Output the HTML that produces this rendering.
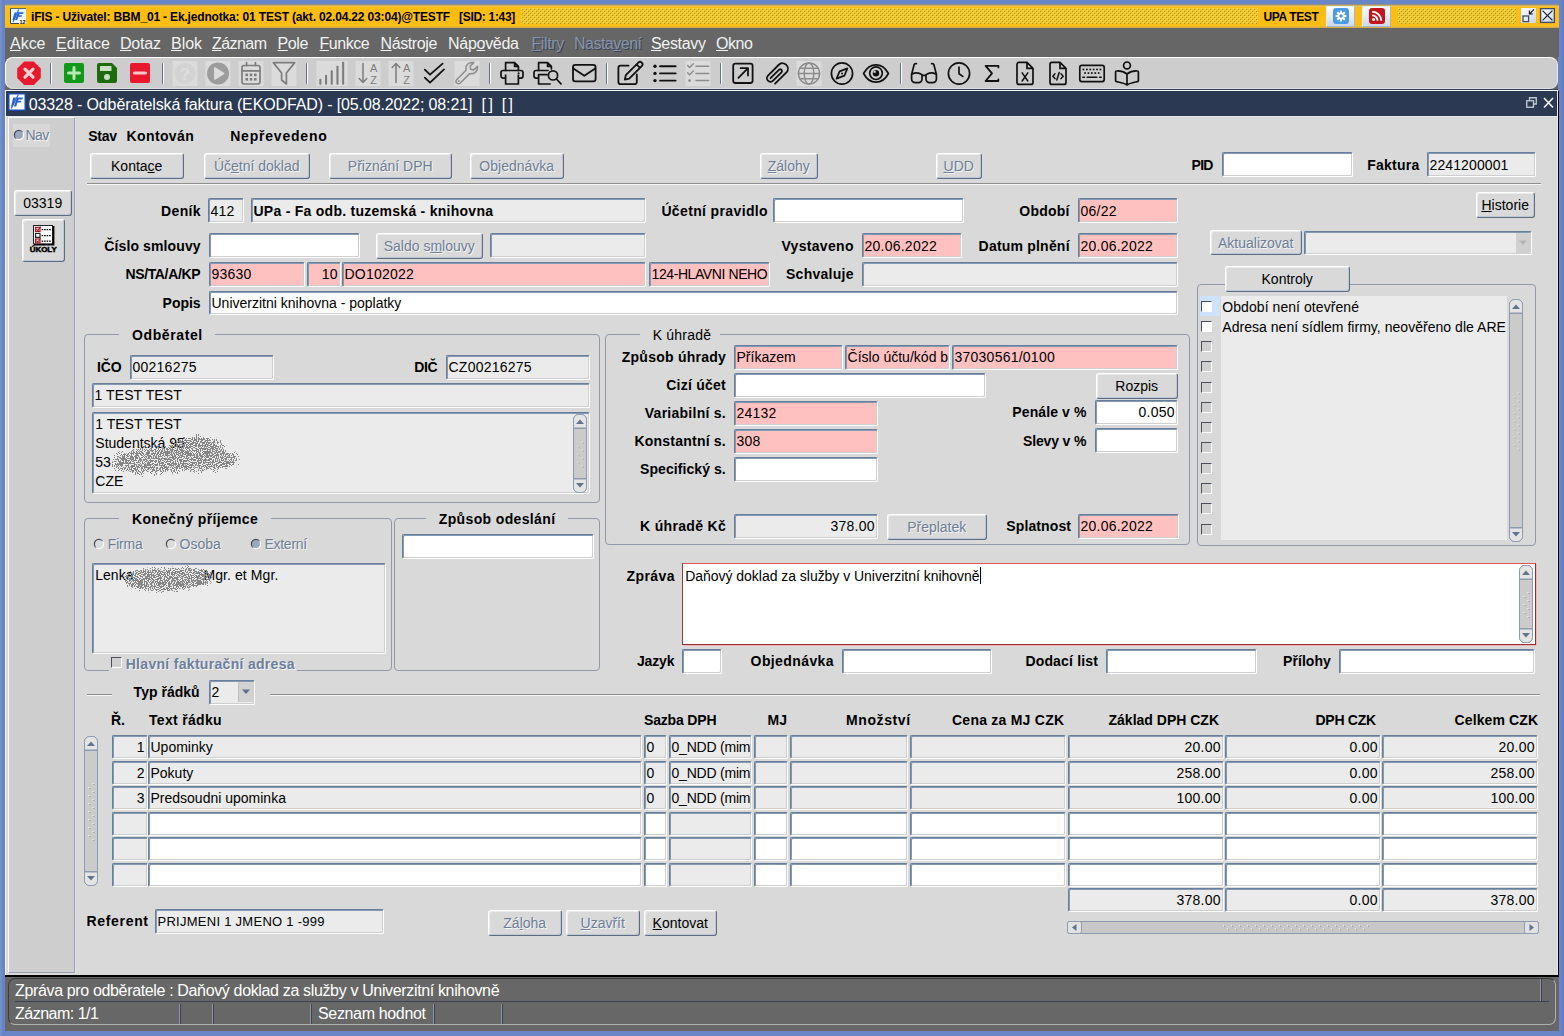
<!DOCTYPE html>
<html lang="cs"><head><meta charset="utf-8"><title>iFIS</title><style>
html,body{margin:0;padding:0}
body{width:1564px;height:1036px;background:#6a86c6;position:relative;overflow:hidden;font-family:"Liberation Sans",sans-serif;font-size:14px;color:#000;line-height:1}
div,span{box-sizing:border-box}
.a{position:absolute;white-space:nowrap}
.f{position:absolute;border:1px solid;border-color:#687f9c #fff #fff #687f9c;border-radius:2px;background:#fff;box-shadow:inset 1px 1px 0 #8699b2,inset -1px -1px 0 #cfcfd2}
.g{background:#ebebeb}
.p{background:#ffc0c0}
.r{text-align:right}
.b{font-weight:bold}
.l{position:absolute;white-space:nowrap;font-weight:bold;letter-spacing:.25px}
.lr{text-align:right}
.btn{position:absolute;border:1px solid;border-color:#fff #5f6c80 #5f6c80 #fff;border-radius:3px;background:#d9d9d9;box-shadow:inset -1px -1px 0 #bcc8d8,inset 1px 1px 0 #ececec}
.dis{color:#7f8ea6}
.gb{position:absolute;border:1px solid #9299ab;border-radius:4px}
.gt{position:absolute;background:#d9d9d9;white-space:nowrap;font-weight:bold;padding:0 18px}
.hl{position:absolute;height:2px;border-top:1px solid #8e8e8e;border-bottom:1px solid #f6f6f6}
u{text-decoration:underline;text-underline-offset:1px;text-decoration-thickness:1px}
</style></head><body>
<div class="a" style="left:0;top:0;width:1564px;height:1036px;background:linear-gradient(90deg,#7a94d2 0,#6582c4 3px,#6a86c6 5px,#6a86c6 1559px,#6582c4 1561px,#5f7cc0 1564px)"></div>
<div class="a" style="left:5px;top:4px;width:1554px;height:24px;background:linear-gradient(#7e86a0 0,#a89c6c 1px,#f0c456 2px,#fdbd12 3.5px,#fdbd12 21px,#ecb934 23px,#b9a05a 24px)"></div>
<svg class="a" style="left:521px;top:8px" width="737" height="16" viewBox="0 0 737 16"><defs><pattern id="d1" width="4" height="4" patternUnits="userSpaceOnUse"><rect width="4" height="4" fill="#f5c42a"/><rect x="0" y="0" width="1" height="1" fill="#fff468"/><rect x="2" y="2" width="1" height="1" fill="#fff468"/><rect x="1" y="1" width="1" height="1" fill="#ab850a"/><rect x="3" y="3" width="1" height="1" fill="#ab850a"/></pattern></defs><rect width="737" height="16" fill="url(#d1)"/></svg>
<svg class="a" style="left:1398px;top:8px" width="118" height="16" viewBox="0 0 118 16"><defs><pattern id="d2" width="4" height="4" patternUnits="userSpaceOnUse"><rect width="4" height="4" fill="#f5c42a"/><rect x="0" y="0" width="1" height="1" fill="#fff468"/><rect x="2" y="2" width="1" height="1" fill="#fff468"/><rect x="1" y="1" width="1" height="1" fill="#ab850a"/><rect x="3" y="3" width="1" height="1" fill="#ab850a"/></pattern></defs><rect width="118" height="16" fill="url(#d2)"/></svg>
<svg class="a" style="left:10px;top:8px" width="16" height="16" viewBox="0 0 16 16"><rect x="0" y="0" width="16" height="16" fill="#e9f7ff"/><path d="M0.5 0 V15.5 H9" stroke="#3a4450" fill="none"/><path d="M0 0.5 H16" stroke="#5a6a7a" fill="none"/><path d="M4.6 4.4 H7 L4.2 12 H2.4 Z M8 4.2 H13.6 L13 6 H9.4 L9 7.2 H12 L11.4 8.8 H8.4 L7.2 12 H5 Z" fill="#2a62d4"/><path d="M8.8 1.4 L3 14" stroke="#2a62d4" stroke-width="1.1" fill="none"/><rect x="9" y="11" width="7" height="5" fill="#fffce8"/><text x="12.6" y="15.6" font-family="Liberation Sans,sans-serif" font-weight="bold" font-size="5.5" text-anchor="middle">12</text></svg>
<div class="a" style="font-size:12px;font-weight:bold;color:#000;height:18px;line-height:18px;top:8px;letter-spacing:-0.165px;left:31.00px;">iFIS - Uživatel: BBM_01 - Ek.jednotka: 01 TEST (akt. 02.04.22 03:04)@TESTF</div>
<div class="a" style="font-size:12px;font-weight:bold;color:#000;height:18px;line-height:18px;top:8px;letter-spacing:-0.304px;left:459.00px;">[SID: 1:43]</div>
<div class="a" style="font-size:12px;font-weight:bold;color:#000;height:18px;line-height:18px;top:8px;letter-spacing:-0.400px;left:1263.60px;">UPA TEST</div>
<div class="a" style="left:1326px;top:6px;width:29px;height:21px;background:linear-gradient(#fdfdfe,#e4e9f2 55%,#cfd8e8);border:1px solid;border-color:#e8ecf4 #a8b4cc #a8b4cc #e8ecf4"></div>
<svg class="a" style="left:1333px;top:8px" width="16" height="16" viewBox="0 0 16 16"><rect width="16" height="16" rx="3" fill="#4a9bea"/><g fill="#fff"><circle cx="8" cy="8" r="3.6"/><rect x="7" y="2.6" width="2" height="10.8" rx="0.5" transform="rotate(0 8 8)"/><rect x="7" y="2.6" width="2" height="10.8" rx="0.5" transform="rotate(45 8 8)"/><rect x="7" y="2.6" width="2" height="10.8" rx="0.5" transform="rotate(90 8 8)"/><rect x="7" y="2.6" width="2" height="10.8" rx="0.5" transform="rotate(135 8 8)"/></g><circle cx="8" cy="8" r="1.7" fill="#4a9bea"/></svg>
<div class="a" style="left:1362px;top:6px;width:29px;height:21px;background:linear-gradient(#fdfdfe,#e4e9f2 55%,#cfd8e8);border:1px solid;border-color:#e8ecf4 #a8b4cc #a8b4cc #e8ecf4"></div>
<svg class="a" style="left:1369px;top:8px" width="16" height="16" viewBox="0 0 16 16"><rect width="16" height="16" rx="3" fill="#c4151c"/><circle cx="4.6" cy="11.6" r="1.5" fill="#fff"/><path d="M3.2 7.4 a5.4 5.4 0 0 1 5.4 5.4 M3.2 3.8 a9 9 0 0 1 9 9" stroke="#fff" stroke-width="1.9" fill="none"/></svg>
<svg class="a" style="left:1521px;top:8px" width="34" height="16" viewBox="0 0 34 16"><defs><linearGradient id="wb" x1="0" y1="0" x2="1" y2="1"><stop offset="0" stop-color="#fff"/><stop offset="1" stop-color="#c9d4e6"/></linearGradient></defs><rect x="0" y="0" width="15" height="15" fill="url(#wb)"/><rect x="2" y="8" width="5.6" height="5.6" fill="#e8ecf4" stroke="#3c4c68" stroke-width="1.3"/><path d="M13 1.4 L8.6 5.8 M8.4 2.6 V6 H11.8" stroke="#111" stroke-width="1.1" fill="none"/><rect x="19.6" y="0.6" width="13.8" height="13.8" fill="url(#wb)" stroke="#3c4c68" stroke-width="1.4"/><path d="M21.6 2.6 L31.4 12.4 M31.4 2.6 L21.6 12.4" stroke="#1c2638" stroke-width="1.3"/></svg>
<div class="a" style="left:5px;top:28px;width:1554px;height:29px;background:#666"></div>
<div class="a" style="left:5px;top:57px;width:1553px;height:33px;background:#666"></div>
<div class="a" style="left:5px;top:57px;width:1553px;height:32px;background:#cdcdcd;border-radius:8px;border:1px solid;border-color:#fff #e6e6e6 #d9dde5 #fff"></div>
<div class="a" style="left:12px;top:89px;width:1546px;height:1px;background:#3a4254"></div>
<div class="a" style="left:50px;top:63px;width:2px;height:21px;border-radius:1px;background:linear-gradient(90deg,#5d6f8c 1px,#fff 1px)"></div>
<div class="a" style="left:162px;top:63px;width:2px;height:21px;border-radius:1px;background:linear-gradient(90deg,#5d6f8c 1px,#fff 1px)"></div>
<div class="a" style="left:306px;top:63px;width:2px;height:21px;border-radius:1px;background:linear-gradient(90deg,#5d6f8c 1px,#fff 1px)"></div>
<div class="a" style="left:489px;top:63px;width:2px;height:21px;border-radius:1px;background:linear-gradient(90deg,#5d6f8c 1px,#fff 1px)"></div>
<div class="a" style="left:606px;top:63px;width:2px;height:21px;border-radius:1px;background:linear-gradient(90deg,#5d6f8c 1px,#fff 1px)"></div>
<div class="a" style="left:720px;top:63px;width:2px;height:21px;border-radius:1px;background:linear-gradient(90deg,#5d6f8c 1px,#fff 1px)"></div>
<div class="a" style="left:900px;top:63px;width:2px;height:21px;border-radius:1px;background:linear-gradient(90deg,#5d6f8c 1px,#fff 1px)"></div>
<svg class="a" style="left:15.599999999999998px;top:60.3px;overflow:visible" width="26" height="26" viewBox="0 0 26 26"><polygon points="8.2,1.5 17.8,1.5 24.8,8.5 24.8,18 17.8,25 8.2,25 1.2,18 1.2,8.5" fill="#e8192c"/><path d="M9 9.2 L17 17.2 M17 9.2 L9 17.2" stroke="#f6d3d3" stroke-width="3.2" stroke-linecap="round" fill="none"/></svg>
<svg class="a" style="left:61.2px;top:60.3px;overflow:visible" width="26" height="26" viewBox="0 0 26 26"><rect x="3" y="3" width="20" height="20" rx="2" fill="#13991a"/><path d="M7.5 13 H18.5 M13 7.5 V18.5" stroke="#b9e8b4" stroke-width="3" stroke-linecap="round" fill="none"/></svg>
<svg class="a" style="left:94.2px;top:60.3px;overflow:visible" width="26" height="26" viewBox="0 0 26 26"><path d="M5 3 H18 L23 8 V21 a2 2 0 0 1 -2 2 H5 a2 2 0 0 1 -2 -2 V5 a2 2 0 0 1 2 -2 Z" fill="#1d6b0c"/><rect x="6" y="6" width="11.5" height="5" rx="0.6" fill="#c9dfc4"/><circle cx="13" cy="17" r="3" fill="#c9dfc4"/></svg>
<svg class="a" style="left:127.2px;top:60.3px;overflow:visible" width="26" height="26" viewBox="0 0 26 26"><rect x="3" y="3" width="20" height="20" rx="2" fill="#e8192c"/><path d="M7.5 13 H18.5" stroke="#f6c9c9" stroke-width="3" stroke-linecap="round" fill="none"/></svg>
<svg class="a" style="left:171.6px;top:60.3px;overflow:visible" width="26" height="26" viewBox="0 0 26 26"><rect x="0.5" y="1" width="25" height="25" fill="#dbdbdb"/><circle cx="13" cy="13.5" r="10.5" fill="#d3d3d3"/><text x="13" y="19.5" font-family="Liberation Sans,sans-serif" font-size="17" fill="#dedede" text-anchor="middle" font-weight="bold">?</text></svg>
<svg class="a" style="left:204.6px;top:60.3px;overflow:visible" width="26" height="26" viewBox="0 0 26 26"><rect x="0.5" y="1" width="25" height="25" fill="#dbdbdb"/><circle cx="13" cy="13.5" r="11" fill="#9c9c9c"/><path d="M9.8 8 L18.6 13.5 L9.8 19 Z" fill="#dcdcdc" stroke="#dcdcdc" stroke-width="1.5" stroke-linejoin="round"/></svg>
<svg class="a" style="left:237.6px;top:60.3px;overflow:visible" width="26" height="26" viewBox="0 0 26 26"><rect x="0.5" y="1" width="25" height="25" fill="#dbdbdb"/><rect x="4" y="5.5" width="18" height="18.5" rx="2.2" fill="none" stroke="#7d7d7d" stroke-width="1.7" stroke-linecap="round" stroke-linejoin="round"/><path d="M4 10.8 H22 M8.6 2.6 V5.5 M17.4 2.6 V5.5" fill="none" stroke="#7d7d7d" stroke-width="1.7" stroke-linecap="round" stroke-linejoin="round"/><rect x="7.4" y="13.6" width="2.6" height="2.6" fill="#7d7d7d"/><rect x="11.7" y="13.6" width="2.6" height="2.6" fill="#7d7d7d"/><rect x="16" y="13.6" width="2.6" height="2.6" fill="#7d7d7d"/><rect x="7.4" y="18" width="2.6" height="2.6" fill="#7d7d7d"/><rect x="11.7" y="18" width="2.6" height="2.6" fill="#7d7d7d"/><rect x="16" y="18" width="2.6" height="2.6" fill="#7d7d7d"/></svg>
<svg class="a" style="left:270.59999999999997px;top:60.3px;overflow:visible" width="26" height="26" viewBox="0 0 26 26"><rect x="0.5" y="1" width="25" height="25" fill="#dbdbdb"/><path d="M2.3 2.6 H23.7 L15.4 13 V24 L10.6 20 V13 Z" fill="none" stroke="#7d7d7d" stroke-width="1.7" stroke-linecap="round" stroke-linejoin="round"/></svg>
<svg class="a" style="left:318.59999999999997px;top:60.3px;overflow:visible" width="26" height="26" viewBox="0 0 26 26"><rect x="-2.5" y="1" width="31" height="25" fill="#dbdbdb"/><rect x="0.3" y="18.8" width="2.1" height="6" rx="0.8" fill="#7d7d7d"/><rect x="6" y="14.8" width="2.1" height="10" rx="0.8" fill="#7d7d7d"/><rect x="11.7" y="10.3" width="2.1" height="14.5" rx="0.8" fill="#7d7d7d"/><rect x="17.4" y="5.800000000000001" width="2.1" height="19" rx="0.8" fill="#7d7d7d"/><rect x="23.1" y="1.8000000000000007" width="2.1" height="23" rx="0.8" fill="#7d7d7d"/></svg>
<svg class="a" style="left:354.5px;top:60.3px;overflow:visible" width="26" height="26" viewBox="0 0 26 26"><rect x="0.5" y="1" width="25" height="25" fill="#dbdbdb"/><path d="M8 3.5 V22.5 M4.2 18.6 L8 22.5 L11.8 18.6" fill="none" stroke="#7d7d7d" stroke-width="1.5" stroke-linecap="round" stroke-linejoin="round"/><text x="18.7" y="11.8" font-family="Liberation Sans,sans-serif" font-size="11" fill="#7d7d7d" text-anchor="middle" >A</text><text x="18.7" y="23.6" font-family="Liberation Sans,sans-serif" font-size="11" fill="#7d7d7d" text-anchor="middle" >Z</text></svg>
<svg class="a" style="left:387.5px;top:60.3px;overflow:visible" width="26" height="26" viewBox="0 0 26 26"><rect x="0.5" y="1" width="25" height="25" fill="#dbdbdb"/><path d="M8 3.5 V22.5 M4.2 7.4 L8 3.5 L11.8 7.4" fill="none" stroke="#7d7d7d" stroke-width="1.5" stroke-linecap="round" stroke-linejoin="round"/><text x="18.7" y="11.8" font-family="Liberation Sans,sans-serif" font-size="11" fill="#7d7d7d" text-anchor="middle" >A</text><text x="18.7" y="23.6" font-family="Liberation Sans,sans-serif" font-size="11" fill="#7d7d7d" text-anchor="middle" >Z</text></svg>
<svg class="a" style="left:421.2px;top:60.3px;overflow:visible" width="26" height="26" viewBox="0 0 26 26"><path d="M3.8 9.6 L9 14.6 L21.6 3.6 M3.8 17.6 L9 22.6 L23 9.4" fill="none" stroke="#111" stroke-width="1.8" stroke-linecap="round" stroke-linejoin="round"/></svg>
<svg class="a" style="left:453.7px;top:60.3px;overflow:visible" width="26" height="26" viewBox="0 0 26 26"><rect x="0.5" y="1" width="25" height="25" fill="#dbdbdb"/><path d="M15.2 3.2 a6.3 6.3 0 0 1 4.6 -0.6 l-3.7 3.7 l0.6 3 l3 0.6 l3.7 -3.7 a6.3 6.3 0 0 1 -7.8 7.4 L6.3 23 a2.4 2.4 0 0 1 -3.5 -3.5 L12.1 10.2 a6.3 6.3 0 0 1 3.1 -7 Z" fill="none" stroke="#8d8d8d" stroke-width="1.5" stroke-linecap="round" stroke-linejoin="round"/><circle cx="4.9" cy="21" r="0.9" fill="#8d8d8d"/></svg>
<svg class="a" style="left:498.59999999999997px;top:60.3px;overflow:visible" width="26" height="26" viewBox="0 0 26 26"><path d="M6.6 10.5 V2.6 H15.6 L19.4 6.4 V10.5 M15.6 2.6 V6.4 H19.4" fill="none" stroke="#111" stroke-width="1.7" stroke-linecap="round" stroke-linejoin="round"/><rect x="2" y="10.5" width="22" height="7.6" rx="2.2" fill="none" stroke="#111" stroke-width="1.7" stroke-linecap="round" stroke-linejoin="round"/><path d="M6.6 14.6 V24 H19.4 V14.6" fill="#ccc" stroke="#111" stroke-width="1.7" stroke-linejoin="round"/><circle cx="19.6" cy="13.3" r="1" fill="#111"/></svg>
<svg class="a" style="left:533.2px;top:60.3px;overflow:visible" width="26" height="26" viewBox="0 0 26 26"><path d="M5.6 10.5 V2.6 H14.6 L18.4 6.4 V9 M14.6 2.6 V6.4 H18.4" fill="none" stroke="#111" stroke-width="1.7" stroke-linecap="round" stroke-linejoin="round"/><path d="M15 10.5 H3.2 a2.2 2.2 0 0 0 -2.2 2.2 V16 a2.2 2.2 0 0 0 2.2 2.2 H5.6 M5.6 14.6 H14 M5.6 14.6 V24 H17" fill="none" stroke="#111" stroke-width="1.7" stroke-linecap="round" stroke-linejoin="round"/><circle cx="20" cy="15.4" r="4.6" fill="none" stroke="#111" stroke-width="1.7" stroke-linecap="round" stroke-linejoin="round"/><path d="M23.4 19 L28 23.8" fill="none" stroke="#111" stroke-width="1.7" stroke-linecap="round" stroke-linejoin="round"/></svg>
<svg class="a" style="left:570.6px;top:60.3px;overflow:visible" width="26" height="26" viewBox="0 0 26 26"><rect x="2" y="4.8" width="22.6" height="16.6" rx="2.4" fill="none" stroke="#111" stroke-width="1.8" stroke-linecap="round" stroke-linejoin="round"/><path d="M2.4 8.4 L13.3 15.8 L24.2 8.4" fill="none" stroke="#111" stroke-width="1.8" stroke-linecap="round" stroke-linejoin="round"/></svg>
<svg class="a" style="left:616.2px;top:60.3px;overflow:visible" width="26" height="26" viewBox="0 0 26 26"><path d="M12.6 5.6 H4.6 a2.2 2.2 0 0 0 -2.2 2.2 V22 a2.2 2.2 0 0 0 2.2 2.2 H18.6 a2.2 2.2 0 0 0 2.2 -2.2 V14.4" fill="none" stroke="#111" stroke-width="1.8" stroke-linecap="round" stroke-linejoin="round"/><path d="M8.8 19.6 L9.8 15.2 L22.6 2.4 a2 2 0 0 1 2.8 0 l0.6 0.6 a2 2 0 0 1 0 2.8 L13.2 18.6 Z M20.6 4.4 L24 7.8" fill="none" stroke="#111" stroke-width="1.8" stroke-linecap="round" stroke-linejoin="round"/></svg>
<svg class="a" style="left:651.8000000000001px;top:60.3px;overflow:visible" width="26" height="26" viewBox="0 0 26 26"><circle cx="3" cy="6.2" r="1.7" fill="#111"/><path d="M8 6.2 H23.6" fill="none" stroke="#111" stroke-width="1.9" stroke-linecap="round" stroke-linejoin="round"/><circle cx="3" cy="13.4" r="1.7" fill="#111"/><path d="M8 13.4 H23.6" fill="none" stroke="#111" stroke-width="1.9" stroke-linecap="round" stroke-linejoin="round"/><circle cx="3" cy="20.6" r="1.7" fill="#111"/><path d="M8 20.6 H23.6" fill="none" stroke="#111" stroke-width="1.9" stroke-linecap="round" stroke-linejoin="round"/></svg>
<svg class="a" style="left:684.6px;top:60.3px;overflow:visible" width="26" height="26" viewBox="0 0 26 26"><rect x="0.5" y="1" width="25" height="25" fill="#dbdbdb"/><path d="M2.6 5.6 L4.6 7.6 L8.4 3.8 M2.6 12.8 L4.6 14.8 L8.4 11" fill="none" stroke="#8d8d8d" stroke-width="1.4" stroke-linecap="round" stroke-linejoin="round"/><circle cx="4.6" cy="20.6" r="1.4" fill="#8d8d8d"/><path d="M11 6.2 H23.6" fill="none" stroke="#8d8d8d" stroke-width="1.5" stroke-linecap="round" stroke-linejoin="round"/><path d="M11 13.4 H23.6" fill="none" stroke="#8d8d8d" stroke-width="1.5" stroke-linecap="round" stroke-linejoin="round"/><path d="M11 20.6 H23.6" fill="none" stroke="#8d8d8d" stroke-width="1.5" stroke-linecap="round" stroke-linejoin="round"/></svg>
<svg class="a" style="left:730.2px;top:60.3px;overflow:visible" width="26" height="26" viewBox="0 0 26 26"><rect x="3.2" y="3.6" width="19.4" height="19.4" rx="2.2" fill="none" stroke="#111" stroke-width="1.8" stroke-linecap="round" stroke-linejoin="round"/><path d="M8.4 17.8 L18 8.2 M10.6 8.2 H18 V15.6" fill="none" stroke="#111" stroke-width="1.8" stroke-linecap="round" stroke-linejoin="round"/></svg>
<svg class="a" style="left:762.7px;top:60.3px;overflow:visible" width="26" height="26" viewBox="0 0 26 26"><path d="M20.2 11.6 L11.6 20.2 a3.6 3.6 0 0 1 -5.1 -5.1 L17.6 4 a5.4 5.4 0 0 1 7.6 7.6 L13.6 23.2 a0 0 0 0 1 0 0 M20.2 11.6 a1.8 1.8 0 0 0 -2.5 -2.5 L9 17.7" fill="none" stroke="#111" stroke-width="1.8" stroke-linecap="round" stroke-linejoin="round" transform="translate(-1.5,0.5)"/></svg>
<svg class="a" style="left:795.6px;top:60.3px;overflow:visible" width="26" height="26" viewBox="0 0 26 26"><rect x="0.5" y="1" width="25" height="25" fill="#dbdbdb"/><circle cx="13" cy="13.5" r="10.6" fill="none" stroke="#8d8d8d" stroke-width="1.5" stroke-linecap="round" stroke-linejoin="round"/><ellipse cx="13" cy="13.5" rx="4.8" ry="10.6" fill="none" stroke="#8d8d8d" stroke-width="1.5" stroke-linecap="round" stroke-linejoin="round"/><path d="M2.4 13.5 H23.6 M3.9 8.2 H22.1 M3.9 18.8 H22.1" fill="none" stroke="#8d8d8d" stroke-width="1.5" stroke-linecap="round" stroke-linejoin="round"/></svg>
<svg class="a" style="left:829.2px;top:60.3px;overflow:visible" width="26" height="26" viewBox="0 0 26 26"><circle cx="13" cy="13.5" r="10.6" fill="none" stroke="#111" stroke-width="1.7" stroke-linecap="round" stroke-linejoin="round"/><path d="M18.4 8.4 L15.4 15.6 L7.6 18.6 L10.6 11.4 Z" fill="none" stroke="#111" stroke-width="1.7" stroke-linecap="round" stroke-linejoin="round"/><circle cx="13" cy="13.5" r="1" fill="#111"/></svg>
<svg class="a" style="left:863.0px;top:60.3px;overflow:visible" width="26" height="26" viewBox="0 0 26 26"><path d="M0.6 13.5 C4 7 8.4 4.8 13 4.8 S22 7 25.4 13.5 C22 20 17.6 22.2 13 22.2 S4 20 0.6 13.5 Z" fill="none" stroke="#111" stroke-width="1.7" stroke-linecap="round" stroke-linejoin="round"/><circle cx="13" cy="13.2" r="6.3" fill="none" stroke="#111" stroke-width="1.7" stroke-linecap="round" stroke-linejoin="round"/><circle cx="13" cy="13.2" r="3.2" fill="#111"/><circle cx="11.6" cy="11.8" r="1.3" fill="#ccc"/></svg>
<svg class="a" style="left:911.2px;top:60.3px;overflow:visible" width="26" height="26" viewBox="0 0 26 26"><path d="M5.4 3.6 H4.6 a1.6 1.6 0 0 0 -1.5 1.1 L0.6 14.4 V19 a3.6 3.6 0 0 0 3.6 3.6 H7.4 a3.6 3.6 0 0 0 3.6 -3.6 V15.4 H15 V19 a3.6 3.6 0 0 0 3.6 3.6 H21.8 a3.6 3.6 0 0 0 3.6 -3.6 V14.4 L22.9 4.7 a1.6 1.6 0 0 0 -1.5 -1.1 H20.6 M0.8 14.2 C4 12.6 8 12.6 11 14.6 M25.2 14.2 C22 12.6 18 12.6 15 14.6" fill="none" stroke="#111" stroke-width="1.7" stroke-linecap="round" stroke-linejoin="round"/></svg>
<svg class="a" style="left:945.8000000000001px;top:60.3px;overflow:visible" width="26" height="26" viewBox="0 0 26 26"><circle cx="13" cy="13.5" r="10.6" fill="none" stroke="#111" stroke-width="1.7" stroke-linecap="round" stroke-linejoin="round"/><path d="M13 7 V13.8 L16.8 16.4" fill="none" stroke="#111" stroke-width="1.7" stroke-linecap="round" stroke-linejoin="round"/></svg>
<svg class="a" style="left:979.2px;top:60.3px;overflow:visible" width="26" height="26" viewBox="0 0 26 26"><path d="M19.4 7.4 V5.8 H6.6 L13 13.4 L6.6 21 H19.4 V19.4" fill="none" stroke="#111" stroke-width="1.8" stroke-linecap="round" stroke-linejoin="round"/></svg>
<svg class="a" style="left:1011.9000000000001px;top:60.3px;overflow:visible" width="26" height="26" viewBox="0 0 26 26"><path d="M5 4.4 a2 2 0 0 1 2 -2 H15 L21 8.4 V22.4 a2 2 0 0 1 -2 2 H7 a2 2 0 0 1 -2 -2 Z M15 2.4 V8.4 H21" fill="none" stroke="#111" stroke-width="1.7" stroke-linecap="round" stroke-linejoin="round"/><path d="M10.2 12.8 L15.8 21 M15.8 12.8 L10.2 21" fill="none" stroke="#111" stroke-width="1.5" stroke-linecap="round" stroke-linejoin="round"/></svg>
<svg class="a" style="left:1044.8px;top:60.3px;overflow:visible" width="26" height="26" viewBox="0 0 26 26"><path d="M5 4.4 a2 2 0 0 1 2 -2 H15 L21 8.4 V22.4 a2 2 0 0 1 -2 2 H7 a2 2 0 0 1 -2 -2 Z M15 2.4 V8.4 H21" fill="none" stroke="#111" stroke-width="1.7" stroke-linecap="round" stroke-linejoin="round"/><path d="M10 13.8 L7.8 16.2 L10 18.6 M16 13.8 L18.2 16.2 L16 18.6 M14.2 12.4 L11.8 20" fill="none" stroke="#111" stroke-width="1.5" stroke-linecap="round" stroke-linejoin="round"/></svg>
<svg class="a" style="left:1079.2px;top:60.3px;overflow:visible" width="26" height="26" viewBox="0 0 26 26"><rect x="0.8" y="5.4" width="24.4" height="16.2" rx="2" fill="none" stroke="#111" stroke-width="1.7" stroke-linecap="round" stroke-linejoin="round"/><rect x="3.6" y="8.6" width="1.7" height="1.7" fill="#111"/><rect x="7" y="8.6" width="1.7" height="1.7" fill="#111"/><rect x="10.4" y="8.6" width="1.7" height="1.7" fill="#111"/><rect x="13.8" y="8.6" width="1.7" height="1.7" fill="#111"/><rect x="17.2" y="8.6" width="1.7" height="1.7" fill="#111"/><rect x="20.6" y="8.6" width="1.7" height="1.7" fill="#111"/><rect x="5.2" y="12.2" width="1.7" height="1.7" fill="#111"/><rect x="8.6" y="12.2" width="1.7" height="1.7" fill="#111"/><rect x="12" y="12.2" width="1.7" height="1.7" fill="#111"/><rect x="15.4" y="12.2" width="1.7" height="1.7" fill="#111"/><rect x="18.8" y="12.2" width="1.7" height="1.7" fill="#111"/><path d="M3.8 17.2 H5.4 M8.2 17.2 H17.8 M20.6 17.2 H22.2" fill="none" stroke="#111" stroke-width="1.6" stroke-linecap="round" stroke-linejoin="round"/></svg>
<svg class="a" style="left:1113.8px;top:60.3px;overflow:visible" width="26" height="26" viewBox="0 0 26 26"><circle cx="13" cy="5.4" r="3.4" fill="none" stroke="#111" stroke-width="1.7" stroke-linecap="round" stroke-linejoin="round"/><path d="M13 14 C9.6 11.4 5.6 10.8 2.6 11 a1 1 0 0 0 -1 1 V20.6 a1 1 0 0 0 1 1 C6 22.4 10 23 13 25 C16 23 20 22.4 23.4 21.6 a1 1 0 0 0 1 -1 V12 a1 1 0 0 0 -1 -1 C20.4 10.8 16.4 11.4 13 14 Z M13 14 V25" fill="none" stroke="#111" stroke-width="1.7" stroke-linecap="round" stroke-linejoin="round"/></svg>
<div class="a" style="left:5px;top:90px;width:1553px;height:886px;background:#d9d9d9"></div>
<div class="a" style="left:5px;top:90px;width:1553px;height:1px;background:#f4f4f4"></div>
<div class="a" style="left:5px;top:90px;width:1px;height:886px;background:#f4f4f4"></div>
<div class="a" style="left:6px;top:91px;width:1551px;height:25px;background:#2b3a52"></div>
<div class="a" style="left:6px;top:116px;width:1551px;height:1px;background:#e4e6ec"></div>
<div class="a" style="left:1557px;top:91px;width:1px;height:884px;background:#e8e8e8"></div>
<div class="a" style="left:1558px;top:91px;width:1px;height:885px;background:#000"></div>
<div class="a" style="left:5px;top:975px;width:1554px;height:2px;background:#000"></div>
<svg class="a" style="left:8px;top:93px" width="18" height="18" viewBox="0 0 18 18"><rect x="0.75" y="0.75" width="16.5" height="16.5" fill="#fff" stroke="#1c4aa8" stroke-width="1.5"/><path d="M5.2 4.6 H8 L4.6 13.6 H3 Z M9 4.4 H15 L14.4 6.4 H10.6 L10.1 7.8 H13.4 L12.8 9.6 H9.5 L8.2 13.4 H5.8 Z" fill="#2a62d4"/><path d="M10.4 1.6 L3.2 15.6" stroke="#2a62d4" stroke-width="1.2" fill="none"/></svg>
<div class="a" style="font-size:16px;font-weight:normal;color:#fff;height:24px;line-height:24px;top:93px;letter-spacing:-0.124px;left:28.80px;">03328 - Odběratelská faktura (EKODFAD) - [05.08.2022; 08:21]</div>
<div class="a" style="font-size:16px;font-weight:normal;color:#fff;height:24px;line-height:24px;top:93px;letter-spacing:-0.980px;left:481.60px;">[ ]</div>
<div class="a" style="font-size:16px;font-weight:normal;color:#fff;height:24px;line-height:24px;top:93px;letter-spacing:-0.980px;left:501.70px;">[ ]</div>
<svg class="a" style="left:1526px;top:97px" width="28" height="12" viewBox="0 0 28 12"><path d="M3.5 3.5 V0.75 H10.25 V7 H7.5" stroke="#c4cad6" stroke-width="1.3" fill="none"/><rect x="0.75" y="3.75" width="6.75" height="6.5" stroke="#c4cad6" stroke-width="1.3" fill="none"/><path d="M18 1 L27 10.5 M27 1 L18 10.5" stroke="#f4f4f4" stroke-width="1.6" fill="none"/></svg>
<div class="a" style="left:8px;top:117px;width:67px;height:856px;background:#cecece;border:1px solid;border-color:#fafafa #9a9fb2 #9a9fb2 #fafafa"></div>
<div class="a" style="left:75px;top:118px;width:1px;height:855px;background:#e0e1ea"></div>
<div class="a" style="left:5px;top:977px;width:1554px;height:54px;background:#676767"></div>
<div class="a" style="left:8px;top:978px;width:1548px;height:47px;border:1px solid;border-color:#3c3c3c #b0b0b0 #b0b0b0 #3c3c3c;border-radius:7px"></div>
<div class="a" style="left:15px;top:1001px;width:1534px;height:1px;background:#3c4250"></div>
<div class="a" style="left:179px;top:1004px;width:2px;height:20px;background:linear-gradient(90deg,#8e96a6 1px,#3c4250 1px)"></div>
<div class="a" style="left:211.5px;top:1004px;width:2px;height:20px;background:linear-gradient(90deg,#8e96a6 1px,#3c4250 1px)"></div>
<div class="a" style="left:310px;top:1004px;width:2px;height:20px;background:linear-gradient(90deg,#8e96a6 1px,#3c4250 1px)"></div>
<div class="a" style="left:433px;top:1004px;width:2px;height:20px;background:linear-gradient(90deg,#8e96a6 1px,#3c4250 1px)"></div>
<div class="a" style="left:500.5px;top:1004px;width:2px;height:20px;background:linear-gradient(90deg,#8e96a6 1px,#3c4250 1px)"></div>
<div class="a" style="left:1540px;top:979px;width:2px;height:22px;background:linear-gradient(90deg,#8e96a6 1px,#3c4250 1px)"></div>
<div class="a" style="font-size:16px;font-weight:normal;color:#fff;height:24px;line-height:24px;top:979px;letter-spacing:-0.350px;left:15.00px;">Zpráva pro odběratele : Daňový doklad za služby v Univerzitní knihovně</div>
<div class="a" style="font-size:16px;font-weight:normal;color:#fff;height:24px;line-height:24px;top:1002px;letter-spacing:-0.500px;left:15.00px;">Záznam: 1/1</div>
<div class="a" style="font-size:16px;font-weight:normal;color:#fff;height:24px;line-height:24px;top:1002px;letter-spacing:-0.346px;left:318.00px;">Seznam hodnot</div>
<div class="a" style="font-size:16px;font-weight:normal;color:#f2f2f2;height:24px;line-height:24px;top:32px;letter-spacing:-0.026px;left:10.00px;"><u>A</u>kce</div>
<div class="a" style="font-size:16px;font-weight:normal;color:#f2f2f2;height:24px;line-height:24px;top:32px;letter-spacing:0.099px;left:56.00px;"><u>E</u>ditace</div>
<div class="a" style="font-size:16px;font-weight:normal;color:#f2f2f2;height:24px;line-height:24px;top:32px;letter-spacing:-0.207px;left:120.00px;"><u>D</u>otaz</div>
<div class="a" style="font-size:16px;font-weight:normal;color:#f2f2f2;height:24px;line-height:24px;top:32px;letter-spacing:-0.047px;left:171.00px;"><u>B</u>lok</div>
<div class="a" style="font-size:16px;font-weight:normal;color:#f2f2f2;height:24px;line-height:24px;top:32px;letter-spacing:-0.566px;left:212.00px;"><u>Z</u>áznam</div>
<div class="a" style="font-size:16px;font-weight:normal;color:#f2f2f2;height:24px;line-height:24px;top:32px;letter-spacing:-0.449px;left:277.60px;"><u>P</u>ole</div>
<div class="a" style="font-size:16px;font-weight:normal;color:#f2f2f2;height:24px;line-height:24px;top:32px;letter-spacing:-0.460px;left:319.50px;"><u>F</u>unkce</div>
<div class="a" style="font-size:16px;font-weight:normal;color:#f2f2f2;height:24px;line-height:24px;top:32px;letter-spacing:-0.389px;left:380.50px;"><u>N</u>ástroje</div>
<div class="a" style="font-size:16px;font-weight:normal;color:#f2f2f2;height:24px;line-height:24px;top:32px;letter-spacing:-0.286px;left:448.00px;">Náp<u>o</u>věda</div>
<div class="a" style="font-size:16px;font-weight:normal;color:#8793a8;height:24px;line-height:24px;top:32px;letter-spacing:-0.338px;left:531.40px;text-shadow:1px 1px 0 #3a4358;"><u>F</u>iltry</div>
<div class="a" style="font-size:16px;font-weight:normal;color:#8793a8;height:24px;line-height:24px;top:32px;letter-spacing:-0.512px;left:574.00px;text-shadow:1px 1px 0 #3a4358;">Nasta<u>v</u>ení</div>
<div class="a" style="font-size:16px;font-weight:normal;color:#f2f2f2;height:24px;line-height:24px;top:32px;letter-spacing:-0.323px;left:651.00px;"><u>S</u>estavy</div>
<div class="a" style="font-size:16px;font-weight:normal;color:#f2f2f2;height:24px;line-height:24px;top:32px;letter-spacing:-0.422px;left:716.00px;"><u>O</u>kno</div>
<svg width="0" height="0" style="position:absolute"><defs><linearGradient id="rg" x1="0" y1="0" x2="1" y2="1"><stop offset="0" stop-color="#2c3038"/><stop offset="0.45" stop-color="#5a6272"/><stop offset="0.6" stop-color="#f4f4f4"/><stop offset="1" stop-color="#fff"/></linearGradient><filter id="bl" x="-20%" y="-20%" width="140%" height="140%"><feGaussianBlur stdDeviation="2"/></filter></defs></svg>
<div class="a" style="left:13px;top:124px;width:37px;height:23px;background:#d8d8d8"></div>
<svg class="a" style="left:12.600000000000001px;top:129px" width="12" height="12" viewBox="0 0 12 12"><circle cx="6" cy="6" r="4.6" fill="#9aa8bd" stroke="url(#rg)" stroke-width="1.3"/></svg>
<div class="a" style="font-size:14px;font-weight:normal;color:#6e7e98;height:21px;line-height:21px;top:125px;letter-spacing:-0.645px;left:25.60px;text-shadow:1px 1px 0 #f6f6f6;">Nav</div>
<div class="btn" style="left:14px;top:190px;width:58px;height:26px"></div>
<div class="a" style="font-size:14px;font-weight:normal;color:#000;height:21px;line-height:21px;top:193px;letter-spacing:0.000px;left:23.25px;">03319</div>
<div class="btn" style="left:22px;top:219px;width:43px;height:43px"></div>
<div class="a" style="font-size:14px;font-weight:normal;color:#000;height:21px;line-height:21px;top:231px;letter-spacing:0.000px;left:43.20px;"></div>
<svg class="a" style="left:29px;top:224px" width="30" height="30" viewBox="0 0 30 30"><rect x="4.5" y="1.5" width="19" height="18.5" fill="#fff" stroke="#222" stroke-width="1"/><path d="M24.6 2 V20.6 H5" stroke="#000" stroke-width="1.6" fill="none"/><rect x="6.6" y="3.4" width="4.4" height="4" fill="#fff" stroke="#b01020" stroke-width="1.2"/><path d="M12.6 5.6 H22" stroke="#000" stroke-width="1.2" stroke-dasharray="1.6 0.9"/><rect x="6.6" y="9.4" width="4.4" height="4" fill="#fff" stroke="#222" stroke-width="1.2"/><path d="M12.6 11.600000000000001 H22" stroke="#000" stroke-width="1.2" stroke-dasharray="1.6 0.9"/><rect x="6.6" y="15" width="4.4" height="4" fill="#fff" stroke="#b01020" stroke-width="1.2"/><path d="M12.6 17.2 H22" stroke="#000" stroke-width="1.2" stroke-dasharray="1.6 0.9"/><path d="M7.4 5 L8.8 6.6 L11.6 2.6 M7.4 16.6 L8.8 18.2 L11.6 14.2" stroke="#b01020" stroke-width="1.1" fill="none"/><text x="14.2" y="28.4" font-family="Liberation Sans,sans-serif" font-weight="bold" font-size="8" text-anchor="middle" textLength="27" lengthAdjust="spacingAndGlyphs" stroke="#000" stroke-width="0.5">ÚKOLY</text></svg>
<div class="a" style="font-size:14px;font-weight:bold;color:#000;height:21px;line-height:21px;top:126px;letter-spacing:-0.254px;left:88.20px;">Stav</div>
<div class="a" style="font-size:14px;font-weight:bold;color:#000;height:21px;line-height:21px;top:126px;letter-spacing:0.369px;left:126.60px;">Kontován</div>
<div class="a" style="font-size:14px;font-weight:bold;color:#000;height:21px;line-height:21px;top:126px;letter-spacing:0.794px;left:230.20px;">Nepřevedeno</div>
<div class="btn" style="left:90px;top:153px;width:94px;height:26px"></div>
<div class="a" style="font-size:14px;font-weight:normal;color:#000;height:21px;line-height:21px;top:156px;letter-spacing:-0.000px;left:111.02px;">Konta<u>c</u>e</div>
<div class="btn" style="left:204px;top:153px;width:106px;height:26px"></div>
<div class="a" style="font-size:14px;font-weight:normal;color:#6e7e98;height:21px;line-height:21px;top:156px;letter-spacing:0.000px;left:213.91px;text-shadow:1px 1px 0 #f4f4f4;">Úč<u>e</u>tní doklad</div>
<div class="btn" style="left:329px;top:153px;width:123px;height:26px"></div>
<div class="a" style="font-size:14px;font-weight:normal;color:#6e7e98;height:21px;line-height:21px;top:156px;letter-spacing:0.000px;left:347.80px;text-shadow:1px 1px 0 #f4f4f4;">Přiznání DPH</div>
<div class="btn" style="left:470px;top:153px;width:94px;height:26px"></div>
<div class="a" style="font-size:14px;font-weight:normal;color:#6e7e98;height:21px;line-height:21px;top:156px;letter-spacing:0.000px;left:479.36px;text-shadow:1px 1px 0 #f4f4f4;">Objednávka</div>
<div class="btn" style="left:760px;top:153px;width:58px;height:26px"></div>
<div class="a" style="font-size:14px;font-weight:normal;color:#6e7e98;height:21px;line-height:21px;top:156px;letter-spacing:0.000px;left:767.70px;text-shadow:1px 1px 0 #f4f4f4;"><u>Z</u>álohy</div>
<div class="btn" style="left:936px;top:153px;width:46px;height:26px"></div>
<div class="a" style="font-size:14px;font-weight:normal;color:#6e7e98;height:21px;line-height:21px;top:156px;letter-spacing:0.000px;left:943.54px;text-shadow:1px 1px 0 #f4f4f4;"><u>U</u>DD</div>
<div class="a" style="font-size:14px;font-weight:bold;color:#000;height:21px;line-height:21px;top:155px;letter-spacing:-0.772px;left:1191.60px;">PID</div>
<div class="f " style="left:1222px;top:152px;width:131px;height:25px;"></div>
<div class="a" style="font-size:14px;font-weight:bold;color:#000;height:21px;line-height:21px;top:155px;letter-spacing:0.226px;left:1367.30px;">Faktura</div>
<div class="f g" style="left:1427px;top:152px;width:109px;height:25px;"></div>
<div class="a" style="font-size:14px;font-weight:normal;color:#000;height:21px;line-height:21px;top:155px;letter-spacing:0.110px;left:1429.50px;">2241200001</div>
<div class="hl" style="left:87px;top:183px;width:1454px"></div>
<div class="a" style="font-size:14px;font-weight:bold;color:#000;height:21px;line-height:21px;top:201px;letter-spacing:0.348px;left:161.10px;">Deník</div>
<div class="f g" style="left:208px;top:198px;width:36px;height:25px;"></div>
<div class="a" style="font-size:14px;font-weight:normal;color:#000;height:21px;line-height:21px;top:201px;letter-spacing:0.240px;left:210.50px;">412</div>
<div class="f g" style="left:251px;top:198px;width:395px;height:25px;"></div>
<div class="a" style="font-size:14px;font-weight:bold;color:#000;height:21px;line-height:21px;top:201px;letter-spacing:0.264px;left:253.50px;">UPa - Fa odb. tuzemská - knihovna</div>
<div class="a" style="font-size:14px;font-weight:bold;color:#000;height:21px;line-height:21px;top:201px;letter-spacing:0.365px;left:661.40px;">Účetní pravidlo</div>
<div class="f " style="left:773px;top:198px;width:191px;height:25px;"></div>
<div class="a" style="font-size:14px;font-weight:bold;color:#000;height:21px;line-height:21px;top:201px;letter-spacing:0.246px;left:1019.30px;">Období</div>
<div class="f p" style="left:1078px;top:198px;width:100px;height:25px;"></div>
<div class="a" style="font-size:14px;font-weight:normal;color:#000;height:21px;line-height:21px;top:201px;letter-spacing:0.240px;left:1080.50px;">06/22</div>
<div class="btn" style="left:1476px;top:192px;width:59px;height:26px"></div>
<div class="a" style="font-size:14px;font-weight:normal;color:#000;height:21px;line-height:21px;top:195px;letter-spacing:0.000px;left:1481.48px;"><u>H</u>istorie</div>
<div class="a" style="font-size:14px;font-weight:bold;color:#000;height:21px;line-height:21px;top:236px;letter-spacing:0.117px;left:104.30px;">Číslo smlouvy</div>
<div class="f " style="left:209px;top:233px;width:151px;height:25px;"></div>
<div class="btn" style="left:376px;top:233px;width:107px;height:26px"></div>
<div class="a" style="font-size:14px;font-weight:normal;color:#6e7e98;height:21px;line-height:21px;top:236px;letter-spacing:0.000px;left:383.69px;text-shadow:1px 1px 0 #f4f4f4;">Saldo s<u>m</u>louvy</div>
<div class="f g" style="left:490px;top:233px;width:156px;height:25px;"></div>
<div class="a" style="font-size:14px;font-weight:bold;color:#000;height:21px;line-height:21px;top:236px;letter-spacing:0.327px;left:781.40px;">Vystaveno</div>
<div class="f p" style="left:862px;top:233px;width:100px;height:25px;"></div>
<div class="a" style="font-size:14px;font-weight:normal;color:#000;height:21px;line-height:21px;top:236px;letter-spacing:0.240px;left:864.50px;">20.06.2022</div>
<div class="a" style="font-size:14px;font-weight:bold;color:#000;height:21px;line-height:21px;top:236px;letter-spacing:0.205px;left:978.60px;">Datum plnění</div>
<div class="f p" style="left:1078px;top:233px;width:100px;height:25px;"></div>
<div class="a" style="font-size:14px;font-weight:normal;color:#000;height:21px;line-height:21px;top:236px;letter-spacing:0.240px;left:1080.50px;">20.06.2022</div>
<div class="btn" style="left:1210px;top:230px;width:92px;height:25px"></div>
<div class="a" style="font-size:14px;font-weight:normal;color:#6e7e98;height:21px;line-height:21px;top:233px;letter-spacing:0.000px;left:1217.97px;text-shadow:1px 1px 0 #f4f4f4;">Aktualizovat</div>
<div class="f g" style="left:1304px;top:231px;width:228px;height:24px;"></div>
<div class="a" style="left:1516px;top:233px;width:14px;height:20px;background:#d0d0d0;border-radius:0 2px 2px 0"></div><svg class="a" style="left:1518px;top:240px" width="10" height="6" viewBox="0 0 10 6"><path d="M1 0.5 H9 L5 5 Z" fill="#b4b4b4"/></svg>
<div class="a" style="font-size:14px;font-weight:bold;color:#000;height:21px;line-height:21px;top:264px;letter-spacing:-0.346px;left:125.40px;">NS/TA/A/KP</div>
<div class="f p" style="left:209px;top:262px;width:96px;height:25px;"></div>
<div class="a" style="font-size:14px;font-weight:normal;color:#000;height:21px;line-height:21px;top:264px;letter-spacing:0.240px;left:211.50px;">93630</div>
<div class="f p" style="left:307px;top:262px;width:34px;height:25px;"></div>
<div class="a" style="font-size:14px;font-weight:normal;color:#000;height:21px;line-height:21px;top:264px;letter-spacing:0.240px;right:1226.50px;text-align:right;margin-right:-0.240px;">10</div>
<div class="f p" style="left:342px;top:262px;width:304px;height:25px;"></div>
<div class="a" style="font-size:14px;font-weight:normal;color:#000;height:21px;line-height:21px;top:264px;letter-spacing:0.240px;left:344.50px;">DO102022</div>
<div class="f p" style="left:649px;top:262px;width:121px;height:25px;"></div>
<div class="a" style="font-size:14px;font-weight:normal;color:#000;height:21px;line-height:21px;top:264px;letter-spacing:-0.406px;left:651.50px;">124-HLAVNI NEHO</div>
<div class="a" style="font-size:14px;font-weight:bold;color:#000;height:21px;line-height:21px;top:264px;letter-spacing:0.270px;left:786.00px;">Schvaluje</div>
<div class="f g" style="left:862px;top:262px;width:316px;height:25px;"></div>
<div class="a" style="font-size:14px;font-weight:bold;color:#000;height:21px;line-height:21px;top:293px;letter-spacing:-0.027px;left:162.60px;">Popis</div>
<div class="f " style="left:209px;top:291px;width:969px;height:24px;"></div>
<div class="a" style="font-size:14px;font-weight:normal;color:#000;height:21px;line-height:21px;top:293px;left:211.50px;">Univerzitni knihovna - poplatky</div>
<div class="gb" style="left:1197px;top:284px;width:339px;height:262px"></div>
<div class="btn" style="left:1225px;top:266px;width:125px;height:26px"></div>
<div class="a" style="font-size:14px;font-weight:normal;color:#000;height:21px;line-height:21px;top:269px;letter-spacing:0.000px;left:1261.53px;">Kontroly</div>
<div class="a" style="left:1221px;top:296px;width:286px;height:244px;background:#ebebeb"></div>
<div class="a" style="left:1200px;top:296px;width:20px;height:20px;background:#cfe2fb"></div>
<div class="a" style="left:1201px;top:301px;width:11px;height:11px;border:1px solid;border-color:#4a4f58 #fff #fff #4a4f58;background:#fff"></div>
<div class="a" style="left:1201px;top:321px;width:11px;height:11px;border:1px solid;border-color:#4a4f58 #fff #fff #4a4f58;background:#fff"></div>
<div class="a" style="left:1201px;top:341px;width:11px;height:11px;border:1px solid;border-color:#4a4f58 #fff #fff #4a4f58;background:#cfcfcf"></div>
<div class="a" style="left:1201px;top:361px;width:11px;height:11px;border:1px solid;border-color:#4a4f58 #fff #fff #4a4f58;background:#cfcfcf"></div>
<div class="a" style="left:1201px;top:382px;width:11px;height:11px;border:1px solid;border-color:#4a4f58 #fff #fff #4a4f58;background:#cfcfcf"></div>
<div class="a" style="left:1201px;top:402px;width:11px;height:11px;border:1px solid;border-color:#4a4f58 #fff #fff #4a4f58;background:#cfcfcf"></div>
<div class="a" style="left:1201px;top:422px;width:11px;height:11px;border:1px solid;border-color:#4a4f58 #fff #fff #4a4f58;background:#cfcfcf"></div>
<div class="a" style="left:1201px;top:442px;width:11px;height:11px;border:1px solid;border-color:#4a4f58 #fff #fff #4a4f58;background:#cfcfcf"></div>
<div class="a" style="left:1201px;top:463px;width:11px;height:11px;border:1px solid;border-color:#4a4f58 #fff #fff #4a4f58;background:#cfcfcf"></div>
<div class="a" style="left:1201px;top:483px;width:11px;height:11px;border:1px solid;border-color:#4a4f58 #fff #fff #4a4f58;background:#cfcfcf"></div>
<div class="a" style="left:1201px;top:503px;width:11px;height:11px;border:1px solid;border-color:#4a4f58 #fff #fff #4a4f58;background:#cfcfcf"></div>
<div class="a" style="left:1201px;top:524px;width:11px;height:11px;border:1px solid;border-color:#4a4f58 #fff #fff #4a4f58;background:#cfcfcf"></div>
<div class="a" style="font-size:14px;font-weight:normal;color:#000;height:21px;line-height:21px;top:297px;letter-spacing:0.064px;left:1222.30px;">Období není otevřené</div>
<div class="a" style="font-size:14px;font-weight:normal;color:#000;height:21px;line-height:21px;top:317px;letter-spacing:0.032px;left:1222.30px;">Adresa není sídlem firmy, neověřeno dle ARE</div>
<svg class="a" style="left:1509px;top:299px" width="14" height="243" viewBox="0 0 14 243"><rect x="0.5" y="0.5" width="13" height="242" rx="5" fill="#cbcbcb" stroke="#8d9bb2"/><path d="M0.5 14.5 H13.5 M0.5 228.5 H13.5" stroke="#8d9bb2" fill="none"/><path d="M0.5 14 V5.5 a5 5 0 0 1 5 -5 H8.5 a5 5 0 0 1 5 5 V14 Z" fill="#e4e4e4" stroke="#8d9bb2"/><path d="M0.5 229 V237.5 a5 5 0 0 0 5 5 H8.5 a5 5 0 0 0 5 -5 V229 Z" fill="#e4e4e4" stroke="#8d9bb2"/><path d="M3.0 10 L7.0 5.4 L11.0 10 Z" fill="#62738f"/><path d="M3.0 233 L7.0 237.6 L11.0 233 Z" fill="#62738f"/><rect x="8.5" y="93.5" width="1" height="1" fill="#f8f8f8"/><rect x="9.5" y="94.5" width="1" height="1" fill="#9a9a9a"/><rect x="4.5" y="97.5" width="1" height="1" fill="#f8f8f8"/><rect x="5.5" y="98.5" width="1" height="1" fill="#9a9a9a"/><rect x="8.5" y="101.5" width="1" height="1" fill="#f8f8f8"/><rect x="9.5" y="102.5" width="1" height="1" fill="#9a9a9a"/><rect x="4.5" y="105.5" width="1" height="1" fill="#f8f8f8"/><rect x="5.5" y="106.5" width="1" height="1" fill="#9a9a9a"/><rect x="8.5" y="109.5" width="1" height="1" fill="#f8f8f8"/><rect x="9.5" y="110.5" width="1" height="1" fill="#9a9a9a"/><rect x="4.5" y="113.5" width="1" height="1" fill="#f8f8f8"/><rect x="5.5" y="114.5" width="1" height="1" fill="#9a9a9a"/><rect x="8.5" y="117.5" width="1" height="1" fill="#f8f8f8"/><rect x="9.5" y="118.5" width="1" height="1" fill="#9a9a9a"/><rect x="4.5" y="121.5" width="1" height="1" fill="#f8f8f8"/><rect x="5.5" y="122.5" width="1" height="1" fill="#9a9a9a"/><rect x="8.5" y="125.5" width="1" height="1" fill="#f8f8f8"/><rect x="9.5" y="126.5" width="1" height="1" fill="#9a9a9a"/><rect x="4.5" y="129.5" width="1" height="1" fill="#f8f8f8"/><rect x="5.5" y="130.5" width="1" height="1" fill="#9a9a9a"/><rect x="8.5" y="133.5" width="1" height="1" fill="#f8f8f8"/><rect x="9.5" y="134.5" width="1" height="1" fill="#9a9a9a"/><rect x="4.5" y="137.5" width="1" height="1" fill="#f8f8f8"/><rect x="5.5" y="138.5" width="1" height="1" fill="#9a9a9a"/><rect x="8.5" y="141.5" width="1" height="1" fill="#f8f8f8"/><rect x="9.5" y="142.5" width="1" height="1" fill="#9a9a9a"/><rect x="4.5" y="145.5" width="1" height="1" fill="#f8f8f8"/><rect x="5.5" y="146.5" width="1" height="1" fill="#9a9a9a"/><rect x="8.5" y="149.5" width="1" height="1" fill="#f8f8f8"/><rect x="9.5" y="150.5" width="1" height="1" fill="#9a9a9a"/></svg>
<div class="gb" style="left:84px;top:334px;width:516px;height:169px"></div>
<div class="a" style="left:119px;top:332px;width:96px;height:5px;background:#d9d9d9"></div>
<div class="a" style="font-size:14px;font-weight:bold;color:#000;height:21px;line-height:21px;top:325px;letter-spacing:0.609px;left:132.00px;">Odběratel</div>
<div class="a" style="font-size:14px;font-weight:bold;color:#000;height:21px;line-height:21px;top:357px;letter-spacing:-0.145px;left:97.10px;">IČO</div>
<div class="f g" style="left:130px;top:355px;width:144px;height:25px;"></div>
<div class="a" style="font-size:14px;font-weight:normal;color:#000;height:21px;line-height:21px;top:357px;letter-spacing:0.240px;left:132.50px;">00216275</div>
<div class="a" style="font-size:14px;font-weight:bold;color:#000;height:21px;line-height:21px;top:357px;letter-spacing:-0.405px;left:414.30px;">DIČ</div>
<div class="f g" style="left:446px;top:355px;width:144px;height:25px;"></div>
<div class="a" style="font-size:14px;font-weight:normal;color:#000;height:21px;line-height:21px;top:357px;letter-spacing:0.240px;left:448.50px;">CZ00216275</div>
<div class="f g" style="left:92px;top:383px;width:498px;height:25px;"></div>
<div class="a" style="font-size:14px;font-weight:normal;color:#000;height:21px;line-height:21px;top:385px;letter-spacing:0.092px;left:94.50px;">1 TEST TEST</div>
<div class="f g" style="left:92px;top:412px;width:498px;height:82px;"></div>
<div class="a" style="font-size:14px;font-weight:normal;color:#000;height:21px;line-height:21px;top:414px;left:95.30px;">1 TEST TEST</div>
<div class="a" style="font-size:14px;font-weight:normal;color:#000;height:21px;line-height:21px;top:433px;left:95.30px;">Studentská 95</div>
<div class="a" style="font-size:14px;font-weight:normal;color:#000;height:21px;line-height:21px;top:452px;left:95.30px;">53</div>
<div class="a" style="font-size:14px;font-weight:normal;color:#000;height:21px;line-height:21px;top:471px;left:95.30px;">CZE</div>
<svg class="a" style="left:108px;top:433px;overflow:visible" width="134" height="44" viewBox="0 0 134 44"><defs><filter id="sp3" x="-15%" y="-30%" width="130%" height="160%" color-interpolation-filters="sRGB"><feGaussianBlur in="SourceAlpha" stdDeviation="2.2" result="sh"/><feTurbulence type="fractalNoise" baseFrequency="0.95" numOctaves="1" seed="3" result="tn"/><feColorMatrix in="tn" type="matrix" values="0 0 0 0 0  0 0 0 0 0  0 0 0 0 0  3 0 0 0 -1" result="n"/><feComposite in="sh" in2="n" operator="arithmetic" k1="0" k2="1" k3="-1" k4="0" result="d"/><feColorMatrix in="d" type="matrix" values="0 0 0 0 0.52  0 0 0 0 0.52  0 0 0 0 0.52  0 0 0 30 -1"/></filter></defs><path d="M6 26 C14 16 40 14 62 14 C70 4 88 2 100 5 C112 8 116 14 118 17 C128 20 132 26 128 31 C120 38 96 38 70 38 C50 42 20 42 10 36 C2 33 2 29 6 26 Z" fill="#000" fill-opacity="0.66" filter="url(#sp3)"/></svg>
<svg class="a" style="left:573px;top:414px" width="14" height="79" viewBox="0 0 14 79"><rect x="0.5" y="0.5" width="13" height="78" rx="5" fill="#cbcbcb" stroke="#8d9bb2"/><path d="M0.5 14.5 H13.5 M0.5 64.5 H13.5" stroke="#8d9bb2" fill="none"/><path d="M0.5 14 V5.5 a5 5 0 0 1 5 -5 H8.5 a5 5 0 0 1 5 5 V14 Z" fill="#e4e4e4" stroke="#8d9bb2"/><path d="M0.5 65 V73.5 a5 5 0 0 0 5 5 H8.5 a5 5 0 0 0 5 -5 V65 Z" fill="#e4e4e4" stroke="#8d9bb2"/><path d="M3.0 10 L7.0 5.4 L11.0 10 Z" fill="#62738f"/><path d="M3.0 69 L7.0 73.6 L11.0 69 Z" fill="#62738f"/><rect x="8.5" y="27.5" width="1" height="1" fill="#f8f8f8"/><rect x="9.5" y="28.5" width="1" height="1" fill="#9a9a9a"/><rect x="4.5" y="31.5" width="1" height="1" fill="#f8f8f8"/><rect x="5.5" y="32.5" width="1" height="1" fill="#9a9a9a"/><rect x="8.5" y="35.5" width="1" height="1" fill="#f8f8f8"/><rect x="9.5" y="36.5" width="1" height="1" fill="#9a9a9a"/><rect x="4.5" y="39.5" width="1" height="1" fill="#f8f8f8"/><rect x="5.5" y="40.5" width="1" height="1" fill="#9a9a9a"/><rect x="8.5" y="43.5" width="1" height="1" fill="#f8f8f8"/><rect x="9.5" y="44.5" width="1" height="1" fill="#9a9a9a"/><rect x="4.5" y="47.5" width="1" height="1" fill="#f8f8f8"/><rect x="5.5" y="48.5" width="1" height="1" fill="#9a9a9a"/><rect x="8.5" y="51.5" width="1" height="1" fill="#f8f8f8"/><rect x="9.5" y="52.5" width="1" height="1" fill="#9a9a9a"/></svg>
<div class="gb" style="left:605px;top:334px;width:585px;height:211px"></div>
<div class="a" style="left:640px;top:332px;width:80px;height:5px;background:#d9d9d9"></div>
<div class="a" style="font-size:14px;font-weight:normal;color:#000;height:21px;line-height:21px;top:325px;letter-spacing:0.215px;left:652.70px;">K úhradě</div>
<div class="a" style="font-size:14px;font-weight:bold;color:#000;height:21px;line-height:21px;top:347px;letter-spacing:0.236px;left:621.80px;">Způsob úhrady</div>
<div class="f p" style="left:734px;top:345px;width:109px;height:25px;"></div>
<div class="a" style="font-size:14px;font-weight:normal;color:#000;height:21px;line-height:21px;top:347px;left:736.50px;">Příkazem</div>
<div class="f p" style="left:845px;top:345px;width:105px;height:25px;"></div>
<div class="a" style="font-size:14px;font-weight:normal;color:#000;height:21px;line-height:21px;top:347px;letter-spacing:0.016px;left:847.50px;">Číslo účtu/kód b</div>
<div class="f p" style="left:952px;top:345px;width:226px;height:25px;"></div>
<div class="a" style="font-size:14px;font-weight:normal;color:#000;height:21px;line-height:21px;top:347px;letter-spacing:0.240px;left:954.50px;">37030561/0100</div>
<div class="a" style="font-size:14px;font-weight:bold;color:#000;height:21px;line-height:21px;top:375px;letter-spacing:0.244px;left:666.20px;">Cizí účet</div>
<div class="f " style="left:734px;top:373px;width:252px;height:25px;"></div>
<div class="btn" style="left:1096px;top:373px;width:82px;height:26px"></div>
<div class="a" style="font-size:14px;font-weight:normal;color:#000;height:21px;line-height:21px;top:376px;letter-spacing:0.000px;left:1115.31px;">Rozpis</div>
<div class="a" style="font-size:14px;font-weight:bold;color:#000;height:21px;line-height:21px;top:403px;letter-spacing:0.257px;left:644.80px;">Variabilní s.</div>
<div class="f p" style="left:734px;top:401px;width:144px;height:25px;"></div>
<div class="a" style="font-size:14px;font-weight:normal;color:#000;height:21px;line-height:21px;top:403px;letter-spacing:0.240px;left:736.50px;">24132</div>
<div class="a" style="font-size:14px;font-weight:bold;color:#000;height:21px;line-height:21px;top:402px;letter-spacing:0.107px;left:1012.30px;">Penále v %</div>
<div class="f " style="left:1095px;top:400px;width:83px;height:25px;"></div>
<div class="a" style="font-size:14px;font-weight:normal;color:#000;height:21px;line-height:21px;top:402px;letter-spacing:0.240px;right:389.50px;text-align:right;margin-right:-0.240px;">0.050</div>
<div class="a" style="font-size:14px;font-weight:bold;color:#000;height:21px;line-height:21px;top:431px;letter-spacing:0.215px;left:634.50px;">Konstantní s.</div>
<div class="f p" style="left:734px;top:429px;width:144px;height:25px;"></div>
<div class="a" style="font-size:14px;font-weight:normal;color:#000;height:21px;line-height:21px;top:431px;letter-spacing:0.240px;left:736.50px;">308</div>
<div class="a" style="font-size:14px;font-weight:bold;color:#000;height:21px;line-height:21px;top:431px;letter-spacing:-0.149px;left:1023.00px;">Slevy v %</div>
<div class="f " style="left:1095px;top:428px;width:83px;height:25px;"></div>
<div class="a" style="font-size:14px;font-weight:bold;color:#000;height:21px;line-height:21px;top:459px;letter-spacing:0.075px;left:640.00px;">Specifický s.</div>
<div class="f " style="left:734px;top:457px;width:144px;height:25px;"></div>
<div class="a" style="font-size:14px;font-weight:bold;color:#000;height:21px;line-height:21px;top:516px;letter-spacing:0.326px;left:640.00px;">K úhradě Kč</div>
<div class="f g" style="left:734px;top:514px;width:144px;height:25px;"></div>
<div class="a" style="font-size:14px;font-weight:normal;color:#000;height:21px;line-height:21px;top:516px;letter-spacing:0.240px;right:689.50px;text-align:right;margin-right:-0.240px;">378.00</div>
<div class="btn" style="left:887px;top:514px;width:100px;height:26px"></div>
<div class="a" style="font-size:14px;font-weight:normal;color:#6e7e98;height:21px;line-height:21px;top:517px;letter-spacing:0.000px;left:907.14px;text-shadow:1px 1px 0 #f4f4f4;">Přeplatek</div>
<div class="a" style="font-size:14px;font-weight:bold;color:#000;height:21px;line-height:21px;top:516px;letter-spacing:0.119px;left:1006.30px;">Splatnost</div>
<div class="f p" style="left:1078px;top:514px;width:101px;height:25px;"></div>
<div class="a" style="font-size:14px;font-weight:normal;color:#000;height:21px;line-height:21px;top:516px;letter-spacing:0.240px;left:1080.50px;">20.06.2022</div>
<div class="gb" style="left:84px;top:518px;width:308px;height:153px"></div>
<div class="a" style="left:119px;top:516px;width:152px;height:5px;background:#d9d9d9"></div>
<div class="a" style="font-size:14px;font-weight:bold;color:#000;height:21px;line-height:21px;top:509px;letter-spacing:0.342px;left:132.00px;">Konečný příjemce</div>
<svg class="a" style="left:93px;top:537.5px" width="12" height="12" viewBox="0 0 12 12"><circle cx="6" cy="6" r="4.6" fill="#dcdcdc" stroke="url(#rg)" stroke-width="1.3"/></svg>
<div class="a" style="font-size:14px;font-weight:normal;color:#6e7e98;height:21px;line-height:21px;top:534px;letter-spacing:-0.213px;left:107.80px;text-shadow:1px 1px 0 #f6f6f6;">Firma</div>
<svg class="a" style="left:165px;top:537.5px" width="12" height="12" viewBox="0 0 12 12"><circle cx="6" cy="6" r="4.6" fill="#dcdcdc" stroke="url(#rg)" stroke-width="1.3"/></svg>
<div class="a" style="font-size:14px;font-weight:normal;color:#6e7e98;height:21px;line-height:21px;top:534px;letter-spacing:-0.009px;left:179.60px;text-shadow:1px 1px 0 #f6f6f6;">Osoba</div>
<svg class="a" style="left:250px;top:537.5px" width="12" height="12" viewBox="0 0 12 12"><circle cx="6" cy="6" r="4.6" fill="#9aa8bd" stroke="url(#rg)" stroke-width="1.3"/></svg>
<div class="a" style="font-size:14px;font-weight:normal;color:#6e7e98;height:21px;line-height:21px;top:534px;letter-spacing:-0.257px;left:264.40px;text-shadow:1px 1px 0 #f6f6f6;">Externí</div>
<div class="f g" style="left:92px;top:563px;width:294px;height:91px;"></div>
<div class="a" style="font-size:14px;font-weight:normal;color:#000;height:21px;line-height:21px;top:565px;left:95.30px;">Lenka</div>
<div class="a" style="font-size:14px;font-weight:normal;color:#000;height:21px;line-height:21px;top:565px;letter-spacing:0.092px;left:203.40px;">Mgr. et Mgr.</div>
<svg class="a" style="left:120px;top:564px;overflow:visible" width="96" height="30" viewBox="0 0 96 30"><defs><filter id="sp5" x="-15%" y="-30%" width="130%" height="160%" color-interpolation-filters="sRGB"><feGaussianBlur in="SourceAlpha" stdDeviation="1.8" result="sh"/><feTurbulence type="fractalNoise" baseFrequency="0.95" numOctaves="1" seed="5" result="tn"/><feColorMatrix in="tn" type="matrix" values="0 0 0 0 0  0 0 0 0 0  0 0 0 0 0  3 0 0 0 -1" result="n"/><feComposite in="sh" in2="n" operator="arithmetic" k1="0" k2="1" k3="-1" k4="0" result="d"/><feColorMatrix in="d" type="matrix" values="0 0 0 0 0.52  0 0 0 0 0.52  0 0 0 0 0.52  0 0 0 30 -1"/></filter></defs><path d="M6 14 C10 6 30 4 50 5 C64 2 84 3 90 10 C94 16 88 22 76 23 C60 27 30 28 14 24 C6 22 3 18 6 14 Z" fill="#000" fill-opacity="0.66" filter="url(#sp5)"/></svg>
<div class="a" style="left:109px;top:655px;width:188px;height:18px;background:#d9d9d9"></div>
<div class="a" style="left:111px;top:657px;width:11px;height:11px;border:1px solid;border-color:#4a4f58 #fff #fff #4a4f58;background:#cfcfcf"></div>
<div class="a" style="font-size:14px;font-weight:bold;color:#6c7f9e;height:21px;line-height:21px;top:654px;letter-spacing:0.305px;left:125.70px;text-shadow:1px 1px 0 #f6f6f6;">Hlavní fakturační adresa</div>
<div class="gb" style="left:394px;top:518px;width:206px;height:153px"></div>
<div class="a" style="left:426px;top:516px;width:142px;height:5px;background:#d9d9d9"></div>
<div class="a" style="font-size:14px;font-weight:bold;color:#000;height:21px;line-height:21px;top:509px;letter-spacing:0.359px;left:438.80px;">Způsob odeslání</div>
<div class="f " style="left:402px;top:534px;width:192px;height:25px;"></div>
<div class="a" style="font-size:14px;font-weight:bold;color:#000;height:21px;line-height:21px;top:566px;letter-spacing:0.402px;left:626.60px;">Zpráva</div>
<div class="a" style="left:682px;top:563px;width:854px;height:82px;background:#fff;border:1px solid;border-color:#dc5656 #8e3030 #8e3030 #9c3636;box-shadow:1px 1px 0 #f4b4b4"></div>
<div class="a" style="font-size:14px;font-weight:normal;color:#000;height:21px;line-height:21px;top:566px;letter-spacing:-0.031px;left:685.20px;">Daňový doklad za služby v Univerzitní knihovně</div>
<div class="a" style="left:980px;top:567px;width:1px;height:17px;background:#000"></div>
<svg class="a" style="left:1519px;top:565px" width="14" height="78" viewBox="0 0 14 78"><rect x="0.5" y="0.5" width="13" height="77" rx="5" fill="#cbcbcb" stroke="#8d9bb2"/><path d="M0.5 14.5 H13.5 M0.5 63.5 H13.5" stroke="#8d9bb2" fill="none"/><path d="M0.5 14 V5.5 a5 5 0 0 1 5 -5 H8.5 a5 5 0 0 1 5 5 V14 Z" fill="#e4e4e4" stroke="#8d9bb2"/><path d="M0.5 64 V72.5 a5 5 0 0 0 5 5 H8.5 a5 5 0 0 0 5 -5 V64 Z" fill="#e4e4e4" stroke="#8d9bb2"/><path d="M3.0 10 L7.0 5.4 L11.0 10 Z" fill="#62738f"/><path d="M3.0 68 L7.0 72.6 L11.0 68 Z" fill="#62738f"/><rect x="8.5" y="27.0" width="1" height="1" fill="#f8f8f8"/><rect x="9.5" y="28.0" width="1" height="1" fill="#9a9a9a"/><rect x="4.5" y="31.0" width="1" height="1" fill="#f8f8f8"/><rect x="5.5" y="32.0" width="1" height="1" fill="#9a9a9a"/><rect x="8.5" y="35.0" width="1" height="1" fill="#f8f8f8"/><rect x="9.5" y="36.0" width="1" height="1" fill="#9a9a9a"/><rect x="4.5" y="39.0" width="1" height="1" fill="#f8f8f8"/><rect x="5.5" y="40.0" width="1" height="1" fill="#9a9a9a"/><rect x="8.5" y="43.0" width="1" height="1" fill="#f8f8f8"/><rect x="9.5" y="44.0" width="1" height="1" fill="#9a9a9a"/><rect x="4.5" y="47.0" width="1" height="1" fill="#f8f8f8"/><rect x="5.5" y="48.0" width="1" height="1" fill="#9a9a9a"/><rect x="8.5" y="51.0" width="1" height="1" fill="#f8f8f8"/><rect x="9.5" y="52.0" width="1" height="1" fill="#9a9a9a"/></svg>
<div class="a" style="font-size:14px;font-weight:bold;color:#000;height:21px;line-height:21px;top:651px;letter-spacing:-0.131px;left:636.90px;">Jazyk</div>
<div class="f " style="left:682px;top:649px;width:40px;height:25px;"></div>
<div class="a" style="font-size:14px;font-weight:bold;color:#000;height:21px;line-height:21px;top:651px;letter-spacing:0.397px;left:750.60px;">Objednávka</div>
<div class="f " style="left:842px;top:649px;width:150px;height:25px;"></div>
<div class="a" style="font-size:14px;font-weight:bold;color:#000;height:21px;line-height:21px;top:651px;letter-spacing:0.173px;left:1025.40px;">Dodací list</div>
<div class="f " style="left:1106px;top:649px;width:151px;height:25px;"></div>
<div class="a" style="font-size:14px;font-weight:bold;color:#000;height:21px;line-height:21px;top:651px;letter-spacing:0.041px;left:1283.10px;">Přílohy</div>
<div class="f " style="left:1339px;top:649px;width:196px;height:25px;"></div>
<div class="hl" style="left:87px;top:694px;width:25px"></div>
<div class="hl" style="left:270px;top:694px;width:1270px"></div>
<div class="a" style="font-size:14px;font-weight:bold;color:#000;height:21px;line-height:21px;top:682px;letter-spacing:0.020px;left:133.60px;">Typ řádků</div>
<div class="f g" style="left:209px;top:680px;width:46px;height:25px;"></div>
<div class="a" style="font-size:14px;font-weight:normal;color:#000;height:21px;line-height:21px;top:682px;letter-spacing:0.000px;left:211.50px;">2</div>
<div class="a" style="left:238px;top:682px;width:15px;height:20px;background:#d2d2d2;border-left:1px solid #c0c0c0"></div><svg class="a" style="left:241px;top:689px" width="10" height="6" viewBox="0 0 10 6"><path d="M1 0.5 H9 L5 5 Z" fill="#5c6e8c"/></svg>
<div class="a" style="font-size:14px;font-weight:bold;color:#000;height:21px;line-height:21px;top:710px;letter-spacing:0.000px;left:111.00px;">Ř.</div>
<div class="a" style="font-size:14px;font-weight:bold;color:#000;height:21px;line-height:21px;top:710px;letter-spacing:0.307px;left:149.00px;">Text řádku</div>
<div class="a" style="font-size:14px;font-weight:bold;color:#000;height:21px;line-height:21px;top:710px;letter-spacing:-0.176px;left:644.00px;">Sazba DPH</div>
<div class="a" style="font-size:14px;font-weight:bold;color:#000;height:21px;line-height:21px;top:710px;letter-spacing:0.062px;left:767.50px;">MJ</div>
<div class="a" style="font-size:14px;font-weight:bold;color:#000;height:21px;line-height:21px;top:710px;letter-spacing:0.592px;left:846.00px;">Množství</div>
<div class="a" style="font-size:14px;font-weight:bold;color:#000;height:21px;line-height:21px;top:710px;letter-spacing:0.240px;left:952.00px;">Cena za MJ CZK</div>
<div class="a" style="font-size:14px;font-weight:bold;color:#000;height:21px;line-height:21px;top:710px;letter-spacing:0.005px;left:1108.50px;">Základ DPH CZK</div>
<div class="a" style="font-size:14px;font-weight:bold;color:#000;height:21px;line-height:21px;top:710px;letter-spacing:-0.286px;left:1315.50px;">DPH CZK</div>
<div class="a" style="font-size:14px;font-weight:bold;color:#000;height:21px;line-height:21px;top:710px;letter-spacing:0.116px;left:1454.50px;">Celkem CZK</div>
<div class="f g" style="left:112px;top:735px;width:36px;height:24px;"></div>
<div class="a" style="font-size:14px;font-weight:normal;color:#000;height:21px;line-height:21px;top:737px;letter-spacing:0.000px;right:1419.50px;text-align:right;margin-right:-0.000px;">1</div>
<div class="f g" style="left:148px;top:735px;width:494px;height:24px;"></div>
<div class="a" style="font-size:14px;font-weight:normal;color:#000;height:21px;line-height:21px;top:737px;left:150.50px;">Upominky</div>
<div class="f g" style="left:644px;top:735px;width:23px;height:24px;"></div>
<div class="a" style="font-size:14px;font-weight:normal;color:#000;height:21px;line-height:21px;top:737px;letter-spacing:0.000px;left:646.50px;">0</div>
<div class="f g" style="left:669px;top:735px;width:83px;height:24px;"></div>
<div class="a" style="font-size:14px;font-weight:normal;color:#000;height:21px;line-height:21px;top:737px;letter-spacing:-0.207px;left:671.50px;">0_NDD (mim</div>
<div class="f g" style="left:754px;top:735px;width:34px;height:24px;"></div>
<div class="f g" style="left:790px;top:735px;width:118px;height:24px;"></div>
<div class="f g" style="left:910px;top:735px;width:156px;height:24px;"></div>
<div class="f g" style="left:1068px;top:735px;width:156px;height:24px;"></div>
<div class="a" style="font-size:14px;font-weight:normal;color:#000;height:21px;line-height:21px;top:737px;letter-spacing:0.240px;right:343.50px;text-align:right;margin-right:-0.240px;">20.00</div>
<div class="f g" style="left:1225px;top:735px;width:156px;height:24px;"></div>
<div class="a" style="font-size:14px;font-weight:normal;color:#000;height:21px;line-height:21px;top:737px;letter-spacing:0.240px;right:186.50px;text-align:right;margin-right:-0.240px;">0.00</div>
<div class="f g" style="left:1382px;top:735px;width:156px;height:24px;"></div>
<div class="a" style="font-size:14px;font-weight:normal;color:#000;height:21px;line-height:21px;top:737px;letter-spacing:0.240px;right:29.50px;text-align:right;margin-right:-0.240px;">20.00</div>
<div class="f g" style="left:112px;top:761px;width:36px;height:24px;"></div>
<div class="a" style="font-size:14px;font-weight:normal;color:#000;height:21px;line-height:21px;top:763px;letter-spacing:0.000px;right:1419.50px;text-align:right;margin-right:-0.000px;">2</div>
<div class="f g" style="left:148px;top:761px;width:494px;height:24px;"></div>
<div class="a" style="font-size:14px;font-weight:normal;color:#000;height:21px;line-height:21px;top:763px;left:150.50px;">Pokuty</div>
<div class="f g" style="left:644px;top:761px;width:23px;height:24px;"></div>
<div class="a" style="font-size:14px;font-weight:normal;color:#000;height:21px;line-height:21px;top:763px;letter-spacing:0.000px;left:646.50px;">0</div>
<div class="f g" style="left:669px;top:761px;width:83px;height:24px;"></div>
<div class="a" style="font-size:14px;font-weight:normal;color:#000;height:21px;line-height:21px;top:763px;letter-spacing:-0.207px;left:671.50px;">0_NDD (mim</div>
<div class="f g" style="left:754px;top:761px;width:34px;height:24px;"></div>
<div class="f g" style="left:790px;top:761px;width:118px;height:24px;"></div>
<div class="f g" style="left:910px;top:761px;width:156px;height:24px;"></div>
<div class="f g" style="left:1068px;top:761px;width:156px;height:24px;"></div>
<div class="a" style="font-size:14px;font-weight:normal;color:#000;height:21px;line-height:21px;top:763px;letter-spacing:0.240px;right:343.50px;text-align:right;margin-right:-0.240px;">258.00</div>
<div class="f g" style="left:1225px;top:761px;width:156px;height:24px;"></div>
<div class="a" style="font-size:14px;font-weight:normal;color:#000;height:21px;line-height:21px;top:763px;letter-spacing:0.240px;right:186.50px;text-align:right;margin-right:-0.240px;">0.00</div>
<div class="f g" style="left:1382px;top:761px;width:156px;height:24px;"></div>
<div class="a" style="font-size:14px;font-weight:normal;color:#000;height:21px;line-height:21px;top:763px;letter-spacing:0.240px;right:29.50px;text-align:right;margin-right:-0.240px;">258.00</div>
<div class="f g" style="left:112px;top:786px;width:36px;height:24px;"></div>
<div class="a" style="font-size:14px;font-weight:normal;color:#000;height:21px;line-height:21px;top:788px;letter-spacing:0.000px;right:1419.50px;text-align:right;margin-right:-0.000px;">3</div>
<div class="f g" style="left:148px;top:786px;width:494px;height:24px;"></div>
<div class="a" style="font-size:14px;font-weight:normal;color:#000;height:21px;line-height:21px;top:788px;left:150.50px;">Predsoudni upominka</div>
<div class="f g" style="left:644px;top:786px;width:23px;height:24px;"></div>
<div class="a" style="font-size:14px;font-weight:normal;color:#000;height:21px;line-height:21px;top:788px;letter-spacing:0.000px;left:646.50px;">0</div>
<div class="f g" style="left:669px;top:786px;width:83px;height:24px;"></div>
<div class="a" style="font-size:14px;font-weight:normal;color:#000;height:21px;line-height:21px;top:788px;letter-spacing:-0.207px;left:671.50px;">0_NDD (mim</div>
<div class="f g" style="left:754px;top:786px;width:34px;height:24px;"></div>
<div class="f g" style="left:790px;top:786px;width:118px;height:24px;"></div>
<div class="f g" style="left:910px;top:786px;width:156px;height:24px;"></div>
<div class="f g" style="left:1068px;top:786px;width:156px;height:24px;"></div>
<div class="a" style="font-size:14px;font-weight:normal;color:#000;height:21px;line-height:21px;top:788px;letter-spacing:0.240px;right:343.50px;text-align:right;margin-right:-0.240px;">100.00</div>
<div class="f g" style="left:1225px;top:786px;width:156px;height:24px;"></div>
<div class="a" style="font-size:14px;font-weight:normal;color:#000;height:21px;line-height:21px;top:788px;letter-spacing:0.240px;right:186.50px;text-align:right;margin-right:-0.240px;">0.00</div>
<div class="f g" style="left:1382px;top:786px;width:156px;height:24px;"></div>
<div class="a" style="font-size:14px;font-weight:normal;color:#000;height:21px;line-height:21px;top:788px;letter-spacing:0.240px;right:29.50px;text-align:right;margin-right:-0.240px;">100.00</div>
<div class="f g" style="left:112px;top:812px;width:36px;height:24px;"></div>
<div class="f " style="left:148px;top:812px;width:494px;height:24px;"></div>
<div class="f " style="left:644px;top:812px;width:23px;height:24px;"></div>
<div class="f g" style="left:669px;top:812px;width:83px;height:24px;"></div>
<div class="f " style="left:754px;top:812px;width:34px;height:24px;"></div>
<div class="f " style="left:790px;top:812px;width:118px;height:24px;"></div>
<div class="f " style="left:910px;top:812px;width:156px;height:24px;"></div>
<div class="f " style="left:1068px;top:812px;width:156px;height:24px;"></div>
<div class="f " style="left:1225px;top:812px;width:156px;height:24px;"></div>
<div class="f " style="left:1382px;top:812px;width:156px;height:24px;"></div>
<div class="f g" style="left:112px;top:837px;width:36px;height:24px;"></div>
<div class="f " style="left:148px;top:837px;width:494px;height:24px;"></div>
<div class="f " style="left:644px;top:837px;width:23px;height:24px;"></div>
<div class="f g" style="left:669px;top:837px;width:83px;height:24px;"></div>
<div class="f " style="left:754px;top:837px;width:34px;height:24px;"></div>
<div class="f " style="left:790px;top:837px;width:118px;height:24px;"></div>
<div class="f " style="left:910px;top:837px;width:156px;height:24px;"></div>
<div class="f " style="left:1068px;top:837px;width:156px;height:24px;"></div>
<div class="f " style="left:1225px;top:837px;width:156px;height:24px;"></div>
<div class="f " style="left:1382px;top:837px;width:156px;height:24px;"></div>
<div class="f g" style="left:112px;top:863px;width:36px;height:24px;"></div>
<div class="f " style="left:148px;top:863px;width:494px;height:24px;"></div>
<div class="f " style="left:644px;top:863px;width:23px;height:24px;"></div>
<div class="f g" style="left:669px;top:863px;width:83px;height:24px;"></div>
<div class="f " style="left:754px;top:863px;width:34px;height:24px;"></div>
<div class="f " style="left:790px;top:863px;width:118px;height:24px;"></div>
<div class="f " style="left:910px;top:863px;width:156px;height:24px;"></div>
<div class="f " style="left:1068px;top:863px;width:156px;height:24px;"></div>
<div class="f " style="left:1225px;top:863px;width:156px;height:24px;"></div>
<div class="f " style="left:1382px;top:863px;width:156px;height:24px;"></div>
<div class="f g" style="left:1068px;top:888px;width:156px;height:24px;"></div>
<div class="a" style="font-size:14px;font-weight:normal;color:#000;height:21px;line-height:21px;top:890px;letter-spacing:0.240px;right:343.50px;text-align:right;margin-right:-0.240px;">378.00</div>
<div class="f g" style="left:1225px;top:888px;width:156px;height:24px;"></div>
<div class="a" style="font-size:14px;font-weight:normal;color:#000;height:21px;line-height:21px;top:890px;letter-spacing:0.240px;right:186.50px;text-align:right;margin-right:-0.240px;">0.00</div>
<div class="f g" style="left:1382px;top:888px;width:156px;height:24px;"></div>
<div class="a" style="font-size:14px;font-weight:normal;color:#000;height:21px;line-height:21px;top:890px;letter-spacing:0.240px;right:29.50px;text-align:right;margin-right:-0.240px;">378.00</div>
<svg class="a" style="left:84px;top:736px" width="14" height="150" viewBox="0 0 14 150"><rect x="0.5" y="0.5" width="13" height="149" rx="5" fill="#cbcbcb" stroke="#8d9bb2"/><path d="M0.5 14.5 H13.5 M0.5 135.5 H13.5" stroke="#8d9bb2" fill="none"/><path d="M0.5 14 V5.5 a5 5 0 0 1 5 -5 H8.5 a5 5 0 0 1 5 5 V14 Z" fill="#e4e4e4" stroke="#8d9bb2"/><path d="M0.5 136 V144.5 a5 5 0 0 0 5 5 H8.5 a5 5 0 0 0 5 -5 V136 Z" fill="#e4e4e4" stroke="#8d9bb2"/><path d="M3.0 10 L7.0 5.4 L11.0 10 Z" fill="#62738f"/><path d="M3.0 140 L7.0 144.6 L11.0 140 Z" fill="#62738f"/><rect x="8.5" y="47.0" width="1" height="1" fill="#f8f8f8"/><rect x="9.5" y="48.0" width="1" height="1" fill="#9a9a9a"/><rect x="4.5" y="51.0" width="1" height="1" fill="#f8f8f8"/><rect x="5.5" y="52.0" width="1" height="1" fill="#9a9a9a"/><rect x="8.5" y="55.0" width="1" height="1" fill="#f8f8f8"/><rect x="9.5" y="56.0" width="1" height="1" fill="#9a9a9a"/><rect x="4.5" y="59.0" width="1" height="1" fill="#f8f8f8"/><rect x="5.5" y="60.0" width="1" height="1" fill="#9a9a9a"/><rect x="8.5" y="63.0" width="1" height="1" fill="#f8f8f8"/><rect x="9.5" y="64.0" width="1" height="1" fill="#9a9a9a"/><rect x="4.5" y="67.0" width="1" height="1" fill="#f8f8f8"/><rect x="5.5" y="68.0" width="1" height="1" fill="#9a9a9a"/><rect x="8.5" y="71.0" width="1" height="1" fill="#f8f8f8"/><rect x="9.5" y="72.0" width="1" height="1" fill="#9a9a9a"/><rect x="4.5" y="75.0" width="1" height="1" fill="#f8f8f8"/><rect x="5.5" y="76.0" width="1" height="1" fill="#9a9a9a"/><rect x="8.5" y="79.0" width="1" height="1" fill="#f8f8f8"/><rect x="9.5" y="80.0" width="1" height="1" fill="#9a9a9a"/><rect x="4.5" y="83.0" width="1" height="1" fill="#f8f8f8"/><rect x="5.5" y="84.0" width="1" height="1" fill="#9a9a9a"/><rect x="8.5" y="87.0" width="1" height="1" fill="#f8f8f8"/><rect x="9.5" y="88.0" width="1" height="1" fill="#9a9a9a"/><rect x="4.5" y="91.0" width="1" height="1" fill="#f8f8f8"/><rect x="5.5" y="92.0" width="1" height="1" fill="#9a9a9a"/><rect x="8.5" y="95.0" width="1" height="1" fill="#f8f8f8"/><rect x="9.5" y="96.0" width="1" height="1" fill="#9a9a9a"/><rect x="4.5" y="99.0" width="1" height="1" fill="#f8f8f8"/><rect x="5.5" y="100.0" width="1" height="1" fill="#9a9a9a"/><rect x="8.5" y="103.0" width="1" height="1" fill="#f8f8f8"/><rect x="9.5" y="104.0" width="1" height="1" fill="#9a9a9a"/></svg>
<svg class="a" style="left:1067px;top:921px" width="472" height="13" viewBox="0 0 472 13"><rect x="0.5" y="0.5" width="471" height="12" rx="2" fill="#c8c8c8" stroke="#8d9bb2"/><rect x="0.5" y="0.5" width="14" height="12" rx="2" fill="#e2e2e2" stroke="#8d9bb2"/><rect x="457.5" y="0.5" width="14" height="12" rx="2" fill="#e2e2e2" stroke="#8d9bb2"/><path d="M9.5 3 L5 6.5 L9.5 10 Z" fill="#62738f"/><path d="M462.5 3 L467 6.5 L462.5 10 Z" fill="#62738f"/><rect x="156.0" y="4.0" width="1" height="1" fill="#f8f8f8"/><rect x="157.0" y="5.0" width="1" height="1" fill="#9a9a9a"/><rect x="160.0" y="7.5" width="1" height="1" fill="#f8f8f8"/><rect x="161.0" y="8.5" width="1" height="1" fill="#9a9a9a"/><rect x="164.0" y="4.0" width="1" height="1" fill="#f8f8f8"/><rect x="165.0" y="5.0" width="1" height="1" fill="#9a9a9a"/><rect x="168.0" y="7.5" width="1" height="1" fill="#f8f8f8"/><rect x="169.0" y="8.5" width="1" height="1" fill="#9a9a9a"/><rect x="172.0" y="4.0" width="1" height="1" fill="#f8f8f8"/><rect x="173.0" y="5.0" width="1" height="1" fill="#9a9a9a"/><rect x="176.0" y="7.5" width="1" height="1" fill="#f8f8f8"/><rect x="177.0" y="8.5" width="1" height="1" fill="#9a9a9a"/><rect x="180.0" y="4.0" width="1" height="1" fill="#f8f8f8"/><rect x="181.0" y="5.0" width="1" height="1" fill="#9a9a9a"/><rect x="184.0" y="7.5" width="1" height="1" fill="#f8f8f8"/><rect x="185.0" y="8.5" width="1" height="1" fill="#9a9a9a"/><rect x="188.0" y="4.0" width="1" height="1" fill="#f8f8f8"/><rect x="189.0" y="5.0" width="1" height="1" fill="#9a9a9a"/><rect x="192.0" y="7.5" width="1" height="1" fill="#f8f8f8"/><rect x="193.0" y="8.5" width="1" height="1" fill="#9a9a9a"/><rect x="196.0" y="4.0" width="1" height="1" fill="#f8f8f8"/><rect x="197.0" y="5.0" width="1" height="1" fill="#9a9a9a"/><rect x="200.0" y="7.5" width="1" height="1" fill="#f8f8f8"/><rect x="201.0" y="8.5" width="1" height="1" fill="#9a9a9a"/><rect x="204.0" y="4.0" width="1" height="1" fill="#f8f8f8"/><rect x="205.0" y="5.0" width="1" height="1" fill="#9a9a9a"/><rect x="208.0" y="7.5" width="1" height="1" fill="#f8f8f8"/><rect x="209.0" y="8.5" width="1" height="1" fill="#9a9a9a"/><rect x="212.0" y="4.0" width="1" height="1" fill="#f8f8f8"/><rect x="213.0" y="5.0" width="1" height="1" fill="#9a9a9a"/><rect x="216.0" y="7.5" width="1" height="1" fill="#f8f8f8"/><rect x="217.0" y="8.5" width="1" height="1" fill="#9a9a9a"/><rect x="220.0" y="4.0" width="1" height="1" fill="#f8f8f8"/><rect x="221.0" y="5.0" width="1" height="1" fill="#9a9a9a"/><rect x="224.0" y="7.5" width="1" height="1" fill="#f8f8f8"/><rect x="225.0" y="8.5" width="1" height="1" fill="#9a9a9a"/><rect x="228.0" y="4.0" width="1" height="1" fill="#f8f8f8"/><rect x="229.0" y="5.0" width="1" height="1" fill="#9a9a9a"/><rect x="232.0" y="7.5" width="1" height="1" fill="#f8f8f8"/><rect x="233.0" y="8.5" width="1" height="1" fill="#9a9a9a"/><rect x="236.0" y="4.0" width="1" height="1" fill="#f8f8f8"/><rect x="237.0" y="5.0" width="1" height="1" fill="#9a9a9a"/><rect x="240.0" y="7.5" width="1" height="1" fill="#f8f8f8"/><rect x="241.0" y="8.5" width="1" height="1" fill="#9a9a9a"/><rect x="244.0" y="4.0" width="1" height="1" fill="#f8f8f8"/><rect x="245.0" y="5.0" width="1" height="1" fill="#9a9a9a"/><rect x="248.0" y="7.5" width="1" height="1" fill="#f8f8f8"/><rect x="249.0" y="8.5" width="1" height="1" fill="#9a9a9a"/><rect x="252.0" y="4.0" width="1" height="1" fill="#f8f8f8"/><rect x="253.0" y="5.0" width="1" height="1" fill="#9a9a9a"/><rect x="256.0" y="7.5" width="1" height="1" fill="#f8f8f8"/><rect x="257.0" y="8.5" width="1" height="1" fill="#9a9a9a"/><rect x="260.0" y="4.0" width="1" height="1" fill="#f8f8f8"/><rect x="261.0" y="5.0" width="1" height="1" fill="#9a9a9a"/><rect x="264.0" y="7.5" width="1" height="1" fill="#f8f8f8"/><rect x="265.0" y="8.5" width="1" height="1" fill="#9a9a9a"/><rect x="268.0" y="4.0" width="1" height="1" fill="#f8f8f8"/><rect x="269.0" y="5.0" width="1" height="1" fill="#9a9a9a"/><rect x="272.0" y="7.5" width="1" height="1" fill="#f8f8f8"/><rect x="273.0" y="8.5" width="1" height="1" fill="#9a9a9a"/><rect x="276.0" y="4.0" width="1" height="1" fill="#f8f8f8"/><rect x="277.0" y="5.0" width="1" height="1" fill="#9a9a9a"/><rect x="280.0" y="7.5" width="1" height="1" fill="#f8f8f8"/><rect x="281.0" y="8.5" width="1" height="1" fill="#9a9a9a"/><rect x="284.0" y="4.0" width="1" height="1" fill="#f8f8f8"/><rect x="285.0" y="5.0" width="1" height="1" fill="#9a9a9a"/><rect x="288.0" y="7.5" width="1" height="1" fill="#f8f8f8"/><rect x="289.0" y="8.5" width="1" height="1" fill="#9a9a9a"/><rect x="292.0" y="4.0" width="1" height="1" fill="#f8f8f8"/><rect x="293.0" y="5.0" width="1" height="1" fill="#9a9a9a"/><rect x="296.0" y="7.5" width="1" height="1" fill="#f8f8f8"/><rect x="297.0" y="8.5" width="1" height="1" fill="#9a9a9a"/><rect x="300.0" y="4.0" width="1" height="1" fill="#f8f8f8"/><rect x="301.0" y="5.0" width="1" height="1" fill="#9a9a9a"/></svg>
<div class="a" style="font-size:14px;font-weight:bold;color:#000;height:21px;line-height:21px;top:911px;letter-spacing:0.676px;left:86.50px;">Referent</div>
<div class="f g" style="left:155px;top:909px;width:229px;height:25px;"></div>
<div class="a" style="font-size:13px;font-weight:normal;color:#000;height:20px;line-height:20px;top:912px;letter-spacing:0.268px;left:157.50px;">PRIJMENI 1 JMENO 1 -999</div>
<div class="btn" style="left:488px;top:910px;width:74px;height:26px"></div>
<div class="a" style="font-size:14px;font-weight:normal;color:#6e7e98;height:21px;line-height:21px;top:913px;letter-spacing:0.000px;left:503.31px;text-shadow:1px 1px 0 #f4f4f4;">Zá<u>l</u>oha</div>
<div class="btn" style="left:566px;top:910px;width:74px;height:26px"></div>
<div class="a" style="font-size:14px;font-weight:normal;color:#6e7e98;height:21px;line-height:21px;top:913px;letter-spacing:0.000px;left:580.54px;text-shadow:1px 1px 0 #f4f4f4;"><u>U</u>zavřít</div>
<div class="btn" style="left:644px;top:910px;width:73px;height:26px"></div>
<div class="a" style="font-size:14px;font-weight:normal;color:#000;height:21px;line-height:21px;top:913px;letter-spacing:0.000px;left:652.58px;"><u>K</u>ontovat</div>
</body></html>
